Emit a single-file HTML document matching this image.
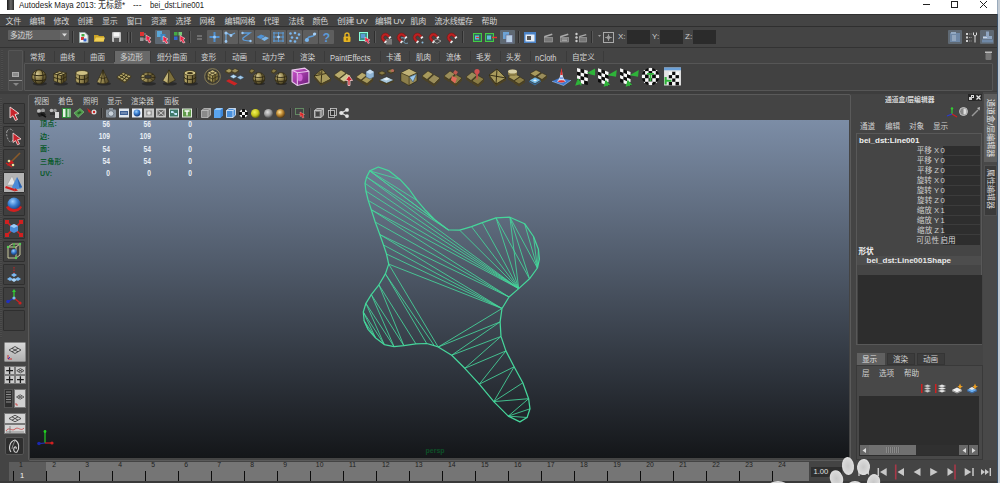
<!DOCTYPE html><html><head><meta charset="utf-8"><title>Autodesk Maya 2013</title><style>
*{box-sizing:border-box;margin:0;padding:0}
html,body{width:1000px;height:483px;overflow:hidden;background:#444}
body{position:relative;font-family:"Liberation Sans","Noto Sans CJK SC",sans-serif;font-size:9px;color:#d8d8d8}
.a{position:absolute}
.t{position:absolute;white-space:nowrap;line-height:1}
.sep{position:absolute;width:1px;background:#2e2e2e;box-shadow:1px 0 0 #585858}
svg{position:absolute;overflow:visible}
</style></head><body>
<svg width="0" height="0" style="left:0;top:0"><defs>
<radialGradient id="gs" cx="35%" cy="30%" r="75%"><stop offset="0" stop-color="#d8cc98"/><stop offset="0.45" stop-color="#94854e"/><stop offset="1" stop-color="#3e361c"/></radialGradient>
<linearGradient id="gl" x1="0" y1="0" x2="1" y2="0"><stop offset="0" stop-color="#b8aa6e"/><stop offset="0.5" stop-color="#8e7f4a"/><stop offset="1" stop-color="#4c4226"/></linearGradient>
<radialGradient id="by" cx="40%" cy="35%" r="65%"><stop offset="0" stop-color="#f4f45a"/><stop offset="0.6" stop-color="#c8c81e"/><stop offset="1" stop-color="#6a6a10"/></radialGradient>
<radialGradient id="bg" cx="40%" cy="35%" r="65%"><stop offset="0" stop-color="#e0e0e0"/><stop offset="0.6" stop-color="#9a9a9a"/><stop offset="1" stop-color="#4c4c4c"/></radialGradient>
<radialGradient id="bo" cx="40%" cy="35%" r="65%"><stop offset="0" stop-color="#ffe6a0"/><stop offset="0.5" stop-color="#c48f38"/><stop offset="1" stop-color="#5a3c12"/></radialGradient>
<radialGradient id="bb" cx="40%" cy="30%" r="70%"><stop offset="0" stop-color="#9fd0ff"/><stop offset="0.5" stop-color="#3a7fd0"/><stop offset="1" stop-color="#173a78"/></radialGradient>
<linearGradient id="pu" x1="0" y1="0" x2="1" y2="1"><stop offset="0" stop-color="#d05ad0"/><stop offset="1" stop-color="#6a1a78"/></linearGradient>
</defs></svg>
<div class="a" style="left:0px;top:0px;width:1000px;height:14px;background:#fff;"></div>
<div class="a" style="left:0px;top:14px;width:997px;height:1.4px;background:#303030;"></div>
<div class="a" style="left:6.5px;top:0px;width:7.5px;height:9.5px;background:linear-gradient(90deg,#1a1a1a,#6a6a6a 55%,#2a2a2a);"></div>
<div class="t" style="left:18.5px;top:0.8px;font-size:8.7px;color:#1a1a1a;transform-origin:0 0;transform:scaleX(0.915);">Autodesk Maya 2013: 无标题*</div>
<div class="t" style="left:133px;top:0.8px;font-size:8.7px;color:#1a1a1a;transform-origin:0 0;transform:scaleX(0.978);">---</div>
<div class="t" style="left:150px;top:0.8px;font-size:8.7px;color:#1a1a1a;transform-origin:0 0;transform:scaleX(0.880);">bei_dst:Line001</div>
<div class="a" style="left:923px;top:4px;width:7px;height:1px;background:#222;"></div>
<div class="a" style="left:951px;top:1px;width:7px;height:7px;background:transparent;border:1px solid #222"></div>
<svg style="left:980px;top:1px;" width="7" height="7" viewBox="0 0 7 7"><path d="M0 0L7 7M7 0L0 7" stroke="#222" stroke-width="1"/></svg>
<div class="t" style="left:5.6px;top:17.6px;font-size:8px;color:#d4d4d4;letter-spacing:-0.4px">文件</div>
<div class="t" style="left:29.6px;top:17.6px;font-size:8px;color:#d4d4d4;letter-spacing:-0.4px">编辑</div>
<div class="t" style="left:53.6px;top:17.6px;font-size:8px;color:#d4d4d4;letter-spacing:-0.4px">修改</div>
<div class="t" style="left:77.6px;top:17.6px;font-size:8px;color:#d4d4d4;letter-spacing:-0.4px">创建</div>
<div class="t" style="left:102.1px;top:17.6px;font-size:8px;color:#d4d4d4;letter-spacing:-0.4px">显示</div>
<div class="t" style="left:126.6px;top:17.6px;font-size:8px;color:#d4d4d4;letter-spacing:-0.4px">窗口</div>
<div class="t" style="left:151.1px;top:17.6px;font-size:8px;color:#d4d4d4;letter-spacing:-0.4px">资源</div>
<div class="t" style="left:175.6px;top:17.6px;font-size:8px;color:#d4d4d4;letter-spacing:-0.4px">选择</div>
<div class="t" style="left:199.6px;top:17.6px;font-size:8px;color:#d4d4d4;letter-spacing:-0.4px">网格</div>
<div class="t" style="left:224.6px;top:17.6px;font-size:8px;color:#d4d4d4;letter-spacing:-0.4px">编辑网格</div>
<div class="t" style="left:263.6px;top:17.6px;font-size:8px;color:#d4d4d4;letter-spacing:-0.4px">代理</div>
<div class="t" style="left:288.6px;top:17.6px;font-size:8px;color:#d4d4d4;letter-spacing:-0.4px">法线</div>
<div class="t" style="left:312.6px;top:17.6px;font-size:8px;color:#d4d4d4;letter-spacing:-0.4px">颜色</div>
<div class="t" style="left:336.6px;top:17.6px;font-size:8px;color:#d4d4d4;transform-origin:0 0;transform:scaleX(1.115);letter-spacing:-0.4px">创建 UV</div>
<div class="t" style="left:374.6px;top:17.6px;font-size:8px;color:#d4d4d4;transform-origin:0 0;transform:scaleX(1.079);letter-spacing:-0.4px">编辑 UV</div>
<div class="t" style="left:410.6px;top:17.6px;font-size:8px;color:#d4d4d4;letter-spacing:-0.4px">肌肉</div>
<div class="t" style="left:434.6px;top:17.6px;font-size:8px;color:#d4d4d4;letter-spacing:-0.4px">流水线缓存</div>
<div class="t" style="left:481.6px;top:17.6px;font-size:8px;color:#d4d4d4;letter-spacing:-0.4px">帮助</div>
<div class="a" style="left:0px;top:26px;width:997px;height:1px;background:#2f2f2f;"></div>
<div class="a" style="left:0px;top:47px;width:997px;height:1px;background:#333;"></div>
<div class="a" style="left:8px;top:30px;width:61px;height:10.3px;background:#606060;border-radius:1px"></div>
<div class="a" style="left:8px;top:40.3px;width:61px;height:1.2px;background:#353535;"></div>
<div class="a" style="left:60px;top:30px;width:9px;height:10.3px;background:#6a6a6a;"></div>
<svg style="left:62px;top:33.3px;" width="5" height="4" viewBox="0 0 5 4"><path d="M0 0.5H5L2.5 3.5Z" fill="#ddd"/></svg>
<div class="t" style="left:10px;top:32.3px;font-size:7.6px;color:#dcdcdc;">多边形</div>
<div class="sep" style="left:72px;top:31px;height:12px"></div>
<svg style="left:79px;top:32px;" width="10" height="11" viewBox="0 0 10 11"><path d="M0.5 0.5H6L9 3.5V10.5H0.5Z" fill="#f2f2f2" stroke="#9aa"/><rect x="2" y="5" width="3" height="3" fill="#d33"/><rect x="4.5" y="6.5" width="3" height="3" fill="#36c"/><rect x="2.5" y="2" width="3" height="2.5" fill="#4a4"/></svg>
<svg style="left:94px;top:34px;" width="11" height="8" viewBox="0 0 11 8"><path d="M0 1H4L5 2H10V7.5H0Z" fill="#c9a227"/><path d="M0 7.5L2 3.5H11L9.5 7.5Z" fill="#f0cf55"/></svg>
<svg style="left:112px;top:32px;" width="9" height="10" viewBox="0 0 9 10"><rect x="0" y="0" width="9" height="10" rx="1" fill="#bdbdbd"/><rect x="1.5" y="0.5" width="6" height="4" fill="#f4f4f4"/><rect x="2" y="6" width="5" height="4" fill="#555"/></svg>
<div class="sep" style="left:127px;top:32px;height:11px"></div>
<div class="sep" style="left:130px;top:32px;height:11px"></div>
<svg style="left:140px;top:32px;" width="12" height="11" viewBox="0 0 12 11"><rect x="0" y="0" width="4" height="4" fill="#d33"/><rect x="0" y="5.5" width="3.5" height="3.5" fill="#999"/><path d="M6 3L11 6L9 7L11 10L9 11L7.5 8L6 9Z" fill="#e24" stroke="#fff" stroke-width="0.5"/><path d="M4 2H6M3.5 7H6" stroke="#bbb" stroke-width="0.7"/></svg>
<div class="a" style="left:155px;top:30px;width:15px;height:14px;background:#5f6973;border-radius:1px"></div>
<svg style="left:157px;top:31px;" width="12" height="12" viewBox="0 0 12 12"><rect x="0" y="0" width="5" height="6" fill="#5aa7d8"/><rect x="3.5" y="3" width="5" height="6" fill="#3b86c2"/><path d="M6 5L11 8L9 9L11 12L9 12.5L7.5 10L6 11Z" fill="#e24" stroke="#fff" stroke-width="0.5"/></svg>
<svg style="left:174px;top:32px;" width="12" height="11" viewBox="0 0 12 11"><rect x="0" y="0" width="3.5" height="3.5" fill="#4a4"/><rect x="4.5" y="0" width="3.5" height="3.5" fill="#7c7"/><rect x="0" y="4.5" width="3.5" height="3.5" fill="#36c"/><path d="M6 3.5L11 6.5L9 7.5L11 10.5L9 11L7.5 8.5L6 9.5Z" fill="#e24" stroke="#fff" stroke-width="0.5"/></svg>
<div class="sep" style="left:189px;top:31px;height:12px"></div>
<svg style="left:197px;top:35px;" width="5" height="5" viewBox="0 0 5 5"><path d="M0 1H5M0 4H5" stroke="#999" stroke-width="1"/></svg>
<div class="a" style="left:207px;top:30px;width:15px;height:14px;background:#5e5e5e;border-radius:1px"></div>
<svg style="left:207px;top:30px;" width="15" height="14" viewBox="0 0 15 14"><path d="M7.5 2V12M2.5 7H12.5" stroke="#4f8fd0" stroke-width="2"/><circle cx="7.5" cy="7" r="1.5" fill="#9cc8f2"/></svg>
<div class="a" style="left:223px;top:30px;width:15px;height:14px;background:#5e5e5e;border-radius:1px"></div>
<svg style="left:223px;top:30px;" width="15" height="14" viewBox="0 0 15 14"><path d="M3 12V3L8 5L12 3" stroke="#6aa6dd" stroke-width="1.2" fill="none"/><circle cx="3" cy="3" r="1.6" fill="#9cc8f2"/><circle cx="8" cy="5.5" r="1.4" fill="#9cc8f2"/><circle cx="3" cy="11.5" r="1.4" fill="#9cc8f2"/></svg>
<div class="a" style="left:239px;top:30px;width:15px;height:14px;background:#5e5e5e;border-radius:1px"></div>
<svg style="left:239px;top:30px;" width="15" height="14" viewBox="0 0 15 14"><path d="M3 3H11L4 8C3 10 6 11 12 11" stroke="#5b9bd8" stroke-width="1.3" fill="none"/><circle cx="3.5" cy="3" r="1.2" fill="#9cc8f2"/><circle cx="11.5" cy="11" r="1.2" fill="#9cc8f2"/></svg>
<div class="a" style="left:255px;top:30px;width:15px;height:14px;background:#5e5e5e;border-radius:1px"></div>
<svg style="left:255px;top:30px;" width="15" height="14" viewBox="0 0 15 14"><path d="M1.5 7L6 4.5L10 6L5.5 9Z" fill="#4f93d6"/><path d="M6 9L10.5 6.5L14 8L9.5 11Z" fill="#78b4ea"/></svg>
<div class="a" style="left:271px;top:30px;width:15px;height:14px;background:#5e5e5e;border-radius:1px"></div>
<svg style="left:271px;top:30px;" width="15" height="14" viewBox="0 0 15 14"><path d="M3 2V12M7.5 2V12M12 2V12M2 3H13M2 7H13M2 11H13" stroke="#5b9bd8" stroke-width="1"/><circle cx="7.5" cy="7" r="1.3" fill="#b5d8f8"/></svg>
<div class="a" style="left:287px;top:30px;width:15px;height:14px;background:#5e5e5e;border-radius:1px"></div>
<svg style="left:287px;top:30px;" width="15" height="14" viewBox="0 0 15 14"><g fill="#7ab4ea"><circle cx="3.5" cy="3.5" r="1.3"/><circle cx="8" cy="3" r="1.3"/><circle cx="12" cy="4.5" r="1.3"/><circle cx="5" cy="7.5" r="1.3"/><circle cx="10" cy="8" r="1.3"/><circle cx="3.5" cy="11" r="1.3"/><circle cx="8" cy="11.5" r="1.3"/></g></svg>
<div class="a" style="left:303px;top:30px;width:15px;height:14px;background:#5e5e5e;border-radius:1px"></div>
<svg style="left:303px;top:30px;" width="15" height="14" viewBox="0 0 15 14"><path d="M2 11L6 7L10 6L13 3" stroke="#5b9bd8" stroke-width="1.4" fill="none"/><circle cx="4" cy="10" r="2" fill="#7ab4ea"/><circle cx="11.5" cy="4" r="1.6" fill="#a8d0f5"/></svg>
<div class="a" style="left:319px;top:30px;width:15px;height:14px;background:#5e5e5e;border-radius:1px"></div>
<svg style="left:319px;top:30px;" width="15" height="14" viewBox="0 0 15 14"><text x="7.5" y="11.5" font-size="12" font-weight="bold" fill="#5b9bd8" text-anchor="middle" font-family="Liberation Sans,sans-serif">?</text></svg>
<svg style="left:343px;top:32px;" width="8" height="10" viewBox="0 0 8 10"><path d="M2 5V3A2 2 0 0 1 6 3V5" stroke="#e6b422" stroke-width="1.4" fill="none"/><rect x="0.5" y="4.5" width="7" height="5.5" rx="1" fill="#e6b422"/><rect x="3.3" y="6" width="1.4" height="2.5" fill="#7a5a08"/></svg>
<svg style="left:359px;top:32px;" width="11" height="11" viewBox="0 0 11 11"><rect x="0.5" y="0.5" width="8" height="8" fill="#3f8f8a" stroke="#8fd"/><rect x="2" y="2" width="4" height="4" fill="#5b9bd8"/><path d="M6 5L11 8L9 8.5L10.5 11L9 11.5L7.5 9L6 10Z" fill="#e24" stroke="#fff" stroke-width="0.4"/></svg>
<div class="sep" style="left:374px;top:31px;height:12px"></div>
<svg style="left:380px;top:32px;" width="13" height="12" viewBox="0 0 13 12"><g transform="translate(5.5,5.5) rotate(-45) scale(0.88)"><path d="M-5 2.5V0A5 5 0 0 1 5 0V2.5H2V0A2 2 0 0 0 -2 0V2.5Z" fill="#bc2222" stroke="#701010" stroke-width="0.5"/><rect x="-5" y="2.5" width="3" height="2" fill="#f0f0f0"/><rect x="2" y="2.5" width="3" height="2" fill="#f0f0f0"/></g><path d="M6 8H12M6 10H12M6 12H12M7 7V12M9 7V12M11 7V12" stroke="#bbb" stroke-width="0.5"/></svg>
<svg style="left:396px;top:32px;" width="13" height="12" viewBox="0 0 13 12"><g transform="translate(5.5,5.5) rotate(-45) scale(0.88)"><path d="M-5 2.5V0A5 5 0 0 1 5 0V2.5H2V0A2 2 0 0 0 -2 0V2.5Z" fill="#bc2222" stroke="#701010" stroke-width="0.5"/><rect x="-5" y="2.5" width="3" height="2" fill="#f0f0f0"/><rect x="2" y="2.5" width="3" height="2" fill="#f0f0f0"/></g><path d="M5 6C8 5 10 7 8 9C7 11 10 12 12 11" stroke="#8bd" stroke-width="0.8" fill="none"/></svg>
<svg style="left:412px;top:32px;" width="13" height="12" viewBox="0 0 13 12"><g transform="translate(5.5,5.5) rotate(-45) scale(0.88)"><path d="M-5 2.5V0A5 5 0 0 1 5 0V2.5H2V0A2 2 0 0 0 -2 0V2.5Z" fill="#bc2222" stroke="#701010" stroke-width="0.5"/><rect x="-5" y="2.5" width="3" height="2" fill="#f0f0f0"/><rect x="2" y="2.5" width="3" height="2" fill="#f0f0f0"/></g><circle cx="10.5" cy="10.5" r="1" fill="#8bd"/></svg>
<svg style="left:428px;top:32px;" width="13" height="12" viewBox="0 0 13 12"><g transform="translate(5.5,5.5) rotate(-45) scale(0.88)"><path d="M-5 2.5V0A5 5 0 0 1 5 0V2.5H2V0A2 2 0 0 0 -2 0V2.5Z" fill="#bc2222" stroke="#701010" stroke-width="0.5"/><rect x="-5" y="2.5" width="3" height="2" fill="#f0f0f0"/><rect x="2" y="2.5" width="3" height="2" fill="#f0f0f0"/></g><path d="M5 9L9 7L13 9L9 11.5Z" fill="none" stroke="#ccc" stroke-width="0.6"/></svg>
<svg style="left:446px;top:32px;" width="13" height="12" viewBox="0 0 13 12"><g transform="translate(5.5,5.5) rotate(-45) scale(0.88)"><path d="M-5 2.5V0A5 5 0 0 1 5 0V2.5H2V0A2 2 0 0 0 -2 0V2.5Z" fill="#bc2222" stroke="#701010" stroke-width="0.5"/><rect x="-5" y="2.5" width="3" height="2" fill="#f0f0f0"/><rect x="2" y="2.5" width="3" height="2" fill="#f0f0f0"/></g></svg>
<div class="sep" style="left:462px;top:31px;height:12px"></div>
<svg style="left:473px;top:33px;" width="9" height="9" viewBox="0 0 9 9"><rect x="0.5" y="0.5" width="8" height="8" fill="#2f6f5a" stroke="#4c4"/><rect x="2" y="2.5" width="4" height="4" fill="#6bd"/><path d="M6 4.5H3" stroke="#e33" stroke-width="1.2"/></svg>
<svg style="left:485px;top:33px;" width="12" height="9" viewBox="0 0 12 9"><rect x="0.5" y="0.5" width="8" height="8" fill="#2f6f5a" stroke="#4c4"/><rect x="2" y="2.5" width="4" height="4" fill="#6bd"/><path d="M7 4.5H12" stroke="#e33" stroke-width="1.4"/></svg>
<div class="a" style="left:500px;top:30px;width:15px;height:14px;background:#5f6973;border-radius:1px"></div>
<svg style="left:503px;top:32px;" width="10" height="11" viewBox="0 0 10 11"><rect x="0" y="0" width="6" height="7" fill="#6da3d6"/><rect x="3" y="3" width="6.5" height="7.5" fill="#b9cfe6" stroke="#557" stroke-width="0.5"/></svg>
<div class="sep" style="left:518px;top:31px;height:12px"></div>
<svg style="left:524px;top:32px;" width="12" height="11" viewBox="0 0 12 11"><rect x="0" y="0" width="12" height="11" fill="#4a82c6"/><rect x="1.5" y="2.5" width="9" height="7" fill="#e8eef6"/><rect x="3" y="4" width="4" height="4" fill="#555"/></svg>
<svg style="left:543px;top:33px;" width="10" height="9" viewBox="0 0 10 9"><path d="M1 3L9 0.5L9.5 2L1.5 4.5Z" fill="#aaa"/><rect x="1.5" y="4.5" width="8" height="4.5" fill="#777" stroke="#aaa" stroke-width="0.6"/></svg>
<svg style="left:559px;top:33px;" width="10" height="9" viewBox="0 0 10 9"><path d="M1 3L9 0.5L9.5 2L1.5 4.5Z" fill="#aaa"/><rect x="1.5" y="4.5" width="8" height="4.5" fill="#777" stroke="#aaa" stroke-width="0.6"/><path d="M3 6H8M3 7.5H8" stroke="#ccc" stroke-width="0.5"/></svg>
<svg style="left:575px;top:32px;" width="12" height="11" viewBox="0 0 12 11"><circle cx="1.5" cy="2" r="1.2" fill="#ccc"/><circle cx="1.5" cy="5.5" r="1.2" fill="#ccc"/><circle cx="1.5" cy="9" r="1.2" fill="#ccc"/><path d="M4 4L11 2L11.5 3.3L4.5 5.3Z" fill="#aaa"/><rect x="4.5" y="5.5" width="7" height="4.5" fill="#777" stroke="#aaa" stroke-width="0.6"/></svg>
<div class="sep" style="left:591px;top:31px;height:12px"></div>
<svg style="left:598px;top:32px;" width="17" height="11" viewBox="0 0 17 11"><path d="M0 3H3L1.5 5Z" fill="#999"/><rect x="5.5" y="0.5" width="10" height="10" fill="none" stroke="#aaa"/><path d="M10.5 2V9M7 5.5H14" stroke="#aaa" stroke-width="0.7"/><circle cx="10.5" cy="5.5" r="1.5" fill="none" stroke="#ccc" stroke-width="0.6"/></svg>
<div class="t" style="left:618px;top:33px;font-size:8px;color:#ccc;">X:</div>
<div class="a" style="left:627px;top:30px;width:23px;height:14px;background:#2b2b2b;"></div>
<div class="t" style="left:652px;top:33px;font-size:8px;color:#ccc;">Y:</div>
<div class="a" style="left:660px;top:30px;width:23px;height:14px;background:#2b2b2b;"></div>
<div class="t" style="left:685px;top:33px;font-size:8px;color:#ccc;">Z:</div>
<div class="a" style="left:693px;top:30px;width:23px;height:14px;background:#2b2b2b;"></div>
<div class="a" style="left:948px;top:30px;width:14px;height:14px;background:#5f6973;border-radius:1px"></div>
<svg style="left:950px;top:32px;" width="10" height="10" viewBox="0 0 10 10"><rect x="0" y="1" width="10" height="9" fill="#6f88a6"/><path d="M1 0H6V2H1Z" fill="#93a9c2"/><path d="M2 4H6M2 6H6M2 8H6" stroke="#c8d4e2" stroke-width="0.8"/></svg>
<svg style="left:966px;top:32px;" width="11" height="11" viewBox="0 0 11 11"><g fill="#d0d0d0"><rect x="0" y="1" width="2" height="2"/><rect x="0" y="4.5" width="2" height="2"/><rect x="0" y="8" width="2" height="2"/></g><path d="M3 2H6M3 5.5H6M3 9H6" stroke="#aaa" stroke-width="0.8" stroke-dasharray="1 0.6"/><path d="M7.5 0.5V3L9 4V10.5M10.5 0.5V3L9 4" stroke="#ddd" stroke-width="1" fill="none"/></svg>
<div class="a" style="left:980px;top:30px;width:14px;height:14px;background:#5f6973;border-radius:1px"></div>
<svg style="left:982px;top:31px;" width="11" height="12" viewBox="0 0 11 12"><path d="M4 0.5H7V5H10V8H1V5H4Z" fill="#8ea4bf"/><path d="M0 8.5H11V11.5H0Z" fill="#6f88a6"/><path d="M1 6.5H5" stroke="#c8d4e2" stroke-width="1"/></svg>
<div class="a" style="left:1px;top:50px;width:2px;height:40px;background:repeating-linear-gradient(180deg,#4c4c4c 0 1px,#404040 1px 2px);"></div>
<div class="a" style="left:8px;top:49.5px;width:14.5px;height:41.5px;background:#494949;border:1px solid #555;border-radius:1px"></div>
<div class="a" style="left:12.4px;top:72px;width:7px;height:5px;background:#8a8a8a;border:1px solid #aaa"></div>
<div class="a" style="left:9.3px;top:79.5px;width:13px;height:1px;background:#8a8a8a;"></div>
<svg style="left:12.5px;top:83px;" width="6" height="3" viewBox="0 0 6 3"><path d="M0 0H6L3 3Z" fill="#888"/></svg>
<div class="a" style="left:23.5px;top:63px;width:969.5px;height:27.8px;background:#414141;border:1px solid #565656;border-radius:1px"></div>
<div class="a" style="left:0px;top:91px;width:997px;height:2.5px;background:#3d3d3d;"></div>
<div class="a" style="left:114px;top:51px;width:36.3px;height:12.5px;background:#696969;"></div>
<div class="a" style="left:24px;top:51px;width:1px;height:11px;background:#3a3a3a;"></div>
<div class="a" style="left:54px;top:51px;width:1px;height:11px;background:#3a3a3a;"></div>
<div class="a" style="left:84px;top:51px;width:1px;height:11px;background:#3a3a3a;"></div>
<div class="a" style="left:114px;top:51px;width:1px;height:11px;background:#3a3a3a;"></div>
<div class="a" style="left:150px;top:51px;width:1px;height:11px;background:#3a3a3a;"></div>
<div class="a" style="left:195px;top:51px;width:1px;height:11px;background:#3a3a3a;"></div>
<div class="a" style="left:225px;top:51px;width:1px;height:11px;background:#3a3a3a;"></div>
<div class="a" style="left:255px;top:51px;width:1px;height:11px;background:#3a3a3a;"></div>
<div class="a" style="left:293px;top:51px;width:1px;height:11px;background:#3a3a3a;"></div>
<div class="a" style="left:324px;top:51px;width:1px;height:11px;background:#3a3a3a;"></div>
<div class="a" style="left:380px;top:51px;width:1px;height:11px;background:#3a3a3a;"></div>
<div class="a" style="left:409px;top:51px;width:1px;height:11px;background:#3a3a3a;"></div>
<div class="a" style="left:439px;top:51px;width:1px;height:11px;background:#3a3a3a;"></div>
<div class="a" style="left:470px;top:51px;width:1px;height:11px;background:#3a3a3a;"></div>
<div class="a" style="left:500px;top:51px;width:1px;height:11px;background:#3a3a3a;"></div>
<div class="a" style="left:530px;top:51px;width:1px;height:11px;background:#3a3a3a;"></div>
<div class="a" style="left:566px;top:51px;width:1px;height:11px;background:#3a3a3a;"></div>
<div class="a" style="left:603px;top:51px;width:1px;height:11px;background:#3a3a3a;"></div>
<div class="t" style="left:30px;top:54.2px;font-size:7.6px;color:#d4d4d4;">常规</div>
<div class="t" style="left:60px;top:54.2px;font-size:7.6px;color:#d4d4d4;">曲线</div>
<div class="t" style="left:90px;top:54.2px;font-size:7.6px;color:#d4d4d4;">曲面</div>
<div class="t" style="left:120px;top:54.2px;font-size:7.6px;color:#d4d4d4;">多边形</div>
<div class="t" style="left:157px;top:54.2px;font-size:7.6px;color:#d4d4d4;">细分曲面</div>
<div class="t" style="left:201px;top:54.2px;font-size:7.6px;color:#d4d4d4;">变形</div>
<div class="t" style="left:232px;top:54.2px;font-size:7.6px;color:#d4d4d4;">动画</div>
<div class="t" style="left:262px;top:54.2px;font-size:7.6px;color:#d4d4d4;">动力学</div>
<div class="t" style="left:300px;top:54.2px;font-size:7.6px;color:#d4d4d4;">渲染</div>
<div class="t" style="left:330px;top:53.6px;font-size:8.4px;color:#d4d4d4;transform-origin:0 0;transform:scaleX(0.909);">PaintEffects</div>
<div class="t" style="left:386px;top:54.2px;font-size:7.6px;color:#d4d4d4;">卡通</div>
<div class="t" style="left:416px;top:54.2px;font-size:7.6px;color:#d4d4d4;">肌肉</div>
<div class="t" style="left:446px;top:54.2px;font-size:7.6px;color:#d4d4d4;">流体</div>
<div class="t" style="left:476px;top:54.2px;font-size:7.6px;color:#d4d4d4;">毛发</div>
<div class="t" style="left:506px;top:54.2px;font-size:7.6px;color:#d4d4d4;">头发</div>
<div class="t" style="left:535px;top:53.6px;font-size:8.4px;color:#d4d4d4;transform-origin:0 0;transform:scaleX(0.888);">nCloth</div>
<div class="t" style="left:572px;top:54.2px;font-size:7.6px;color:#d4d4d4;">自定义</div>
<svg style="left:985px;top:51px;" width="7" height="9" viewBox="0 0 7 9"><rect x="0.5" y="2" width="6" height="7" rx="1" fill="#777"/><rect x="0" y="0.5" width="7" height="1.5" fill="#bbb"/></svg>
<svg style="left:30.5px;top:68.5px" width="16" height="16" viewBox="-9 -9 18 18"><ellipse cx="1" cy="7.5" rx="8" ry="2" fill="#000" opacity="0.35"/><circle r="8" fill="url(#gs)" stroke="#2b2510" stroke-width="0.8"/><path d="M-7.5 -2.8A9 3 0 0 0 7.5 -2.8M-7.5 2.8A9 3 0 0 0 7.5 2.8M-2.8 -7.5A4 9 0 0 0 -2.8 7.5M2.8 -7.5A4 9 0 0 1 2.8 7.5" stroke="#2b2510" stroke-width="1.1" fill="none"/></svg>
<svg style="left:52.0px;top:68.5px" width="16" height="16" viewBox="-9 -9 18 18"><ellipse cx="1" cy="7.5" rx="8" ry="2" fill="#000" opacity="0.35"/><path d="M-7 -3.5L-1 -6.5L7 -4.5L1.5 -1.5Z" fill="#cfc184" stroke="#2b2510" stroke-width="0.7"/><path d="M-7 -3.5L1.5 -1.5V7.5L-7 4.5Z" fill="#9c8e54" stroke="#2b2510" stroke-width="0.7"/><path d="M1.5 -1.5L7 -4.5V4L1.5 7.5Z" fill="#5e532c" stroke="#2b2510" stroke-width="0.7"/><path d="M-7 0.5L1.5 3L7 -0.3M-2.8 -2.5V6M4.3 -3V5.7M-4 -5L4.3 -3M-2.8 -2.5L3 -5.5" stroke="#2b2510" stroke-width="1" fill="none"/></svg>
<svg style="left:74.0px;top:68.5px" width="16" height="16" viewBox="-9 -9 18 18"><ellipse cx="1" cy="7.5" rx="8" ry="2" fill="#000" opacity="0.35"/><path d="M-7 -4.5V4.5A7 2.8 0 0 0 7 4.5V-4.5Z" fill="url(#gl)" stroke="#2b2510" stroke-width="0.7"/><ellipse cx="0" cy="-4.5" rx="7" ry="2.8" fill="#cfc184" stroke="#2b2510" stroke-width="0.7"/><path d="M-7 0A7 2.8 0 0 0 7 0M-2.8 -2V7M2.8 -2V7" stroke="#2b2510" stroke-width="1" fill="none"/></svg>
<svg style="left:95.0px;top:68.5px" width="16" height="16" viewBox="-9 -9 18 18"><ellipse cx="1" cy="7.5" rx="8" ry="2" fill="#000" opacity="0.35"/><path d="M0 -8L-6.5 5A6.5 2.5 0 0 0 6.5 5Z" fill="url(#gl)" stroke="#2b2510" stroke-width="0.7"/><path d="M0 -8L-2.5 7M0 -8L2.5 7M-3.8 0A3.8 1.5 0 0 0 3.8 0" stroke="#2b2510" stroke-width="0.9" fill="none"/></svg>
<svg style="left:116.0px;top:68.5px" width="16" height="16" viewBox="-9 -9 18 18"><path d="M-8 0V1.8L1 7.3L8 0.8V-1L1 5.5Z" fill="#4c4226"/><path d="M-8 0L-1 -5L8 -1L1 5.5Z" fill="#b8aa6c" stroke="#2b2510" stroke-width="0.7"/><path d="M-5.7 -1.7L3.3 3.3M-3.3 -3.3L5.7 1.2M-5 2L2 -3.7M-2 3.8L5 -2.3" stroke="#2b2510" stroke-width="1"/></svg>
<svg style="left:139.5px;top:68.5px" width="16" height="16" viewBox="-9 -9 18 18"><ellipse cx="1" cy="7.5" rx="8" ry="2" fill="#000" opacity="0.35"/><ellipse cx="0" cy="0.5" rx="8" ry="5.5" fill="url(#gl)" stroke="#2b2510" stroke-width="0.7"/><ellipse cx="0" cy="-0.3" rx="3.8" ry="2" fill="#3a3a3a" stroke="#2b2510" stroke-width="0.7"/><path d="M0 -5V-2.3M0 1.8V6M-8 0.5H-3.8M3.8 0.5H8M-5.8 -3.3L-2.8 -1.6M5.8 -3.3L2.8 -1.6M-5.8 4.3L-2.8 1.2M5.8 4.3L2.8 1.2" stroke="#2b2510" stroke-width="0.9"/></svg>
<svg style="left:161.0px;top:68.5px" width="16" height="16" viewBox="-9 -9 18 18"><ellipse cx="1" cy="7.5" rx="8" ry="2" fill="#000" opacity="0.35"/><path d="M0 -8L-7 4L-1 7.5Z" fill="#c0b276" stroke="#2b2510" stroke-width="0.7"/><path d="M0 -8L-1 7.5L7 3.5Z" fill="#7c6f3c" stroke="#2b2510" stroke-width="0.7"/></svg>
<svg style="left:182.0px;top:68.5px" width="16" height="16" viewBox="-9 -9 18 18"><ellipse cx="1" cy="7.5" rx="8" ry="2" fill="#000" opacity="0.35"/><path d="M-6.5 -4.5V4.5A6.5 2.8 0 0 0 6.5 4.5V-4.5Z" fill="url(#gl)" stroke="#2b2510" stroke-width="0.7"/><ellipse cx="0" cy="-4.5" rx="6.5" ry="2.8" fill="#cfc184" stroke="#2b2510" stroke-width="0.7"/><ellipse cx="0" cy="-4.3" rx="3.4" ry="1.3" fill="#3a3218"/><path d="M-6.5 0A6.5 2.8 0 0 0 6.5 0M-2.8 -2V7M2.8 -2V7" stroke="#2b2510" stroke-width="1" fill="none"/></svg>
<svg style="left:204.0px;top:68.0px" width="17" height="17" viewBox="-9 -9 18 18"><circle r="8.3" fill="#3f3d36" stroke="#8f8458" stroke-width="1"/><path d="M-5.5 -3.5L0 -6.5L5.5 -3.5V3L0 6.5L-5.5 3Z" fill="#a89a5c" stroke="#2b2510" stroke-width="0.6"/><path d="M-5.5 -3.5L0 -6.5L5.5 -3.5L0 -0.8Z" fill="#cfc184"/><path d="M0 -0.8L5.5 -3.5V3L0 6.5Z" fill="#7c6f3c"/><path d="M-5.5 -0.3L0 2.8L5.5 -0.3M-2.8 -5L2.8 -2.2M2.8 -5L-2.8 -2.2M-2.8 -2.2V4.8M2.8 -2.2V4.8M0 -0.8V6.5M-5.5 -3.5L0 -0.8L5.5 -3.5" stroke="#2b2510" stroke-width="0.7" fill="none"/></svg>
<svg style="left:225.0px;top:67.5px" width="18" height="18" viewBox="-9 -9 18 18"><path d="M-9 -6V-4.8L-5 -2.8L-1 -5.3V-6.5L-5 -4Z" fill="#4c4226"/><path d="M-9 -6L-5 -8.5L-1 -6.5L-5 -4Z" fill="#a89a5c" stroke="#2b2510" stroke-width="0.5"/><path d="M-3 -6V-4.8L1 -2.8L5 -5.3V-6.5L1 -4Z" fill="#4c4226"/><path d="M-3 -6L1 -8.5L5 -6.5L1 -4Z" fill="#9a8d5a" stroke="#2b2510" stroke-width="0.5"/><path d="M-4 -0.5l3.5 -2l3.5 2l-3.5 2z" fill="#b8dcf4" stroke="#357" stroke-width="0.4"/><path d="M3 0.5l3.5 -2l3.5 2l-3.5 2z" fill="#a0c8e8" stroke="#357" stroke-width="0.4"/><path d="M-8 4L-5 2.2L3.5 6.5L0.5 8.6Z" fill="#cc2424"/></svg>
<svg style="left:248.5px;top:68.0px" width="17" height="17" viewBox="-9 -9 18 18"><ellipse cx="2" cy="7.5" rx="6" ry="1.6" fill="#000" opacity="0.35"/><circle cx="1.5" cy="2" r="6.2" fill="url(#gs)" stroke="#2b2510" stroke-width="0.7"/><path d="M-4.3 0A7 2.4 0 0 0 7.3 0M-4.3 4.2A7 2.4 0 0 0 7.3 4.2M-0.6 -3.8A3 6.5 0 0 0 -0.6 7.8M3.6 -3.8A3 6.5 0 0 1 3.6 7.8" stroke="#2b2510" stroke-width="0.9" fill="none"/><path d="M-9 -5.5V-4.3L-6 -2.5999999999999996L-3 -5.1V-6.3L-6 -3.8Z" fill="#4c4226"/><path d="M-9 -5.5L-6 -8L-3 -6.3L-6 -3.8Z" fill="#8a7c45" stroke="#2b2510" stroke-width="0.5"/></svg>
<svg style="left:270.5px;top:68.0px" width="17" height="17" viewBox="-9 -9 18 18"><ellipse cx="2" cy="7.5" rx="6" ry="1.6" fill="#000" opacity="0.35"/><circle cx="1.5" cy="2" r="6.2" fill="url(#gs)" stroke="#2b2510" stroke-width="0.7"/><path d="M-4.3 0A7 2.4 0 0 0 7.3 0M-4.3 4.2A7 2.4 0 0 0 7.3 4.2M-0.6 -3.8A3 6.5 0 0 0 -0.6 7.8M3.6 -3.8A3 6.5 0 0 1 3.6 7.8" stroke="#2b2510" stroke-width="0.9" fill="none"/><path d="M-9 -5.5V-4.3L-6 -2.5999999999999996L-3 -5.1V-6.3L-6 -3.8Z" fill="#4c4226"/><path d="M-9 -5.5L-6 -8L-3 -6.3L-6 -3.8Z" fill="#8a7c45" stroke="#2b2510" stroke-width="0.5"/></svg>
<svg style="left:290.5px;top:66.5px" width="19" height="19" viewBox="-9 -9 18 18"><path d="M-8 -6L4 -8L8 -5V6L-3 8.5L-8 5Z" fill="url(#pu)" stroke="#e8c8ec" stroke-width="1.1"/><path d="M-8 -6L-3 -3.5L8 -5M-3 -3.5V8.5" stroke="#e8c8ec" stroke-width="1" fill="none"/><ellipse cx="-0.5" cy="1" rx="2.5" ry="3.5" fill="#e478e8" opacity="0.75"/></svg>
<svg style="left:312.5px;top:67.5px" width="18" height="18" viewBox="-9 -9 18 18"><path d="M-8 -1L0 -8L9 2L-1 7Z" fill="#a89a5c" stroke="#2b2510" stroke-width="0.7"/><path d="M-8 -1L-1 7L9 2V4L-1 9L-8 1Z" fill="#4c4226"/><path d="M0 -8L-1 7M-8 -1L4 -3.5" stroke="#2b2510" stroke-width="0.9" fill="none"/><path d="M-5 -3L-2 -6L0 -2Z" fill="#6b5f33"/></svg>
<svg style="left:334.0px;top:67.5px" width="18" height="18" viewBox="-9 -9 18 18"><path d="M-9 -2V0.5L-4 4.0L3 -1.5V-4L-4 1.5Z" fill="#4c4226"/><path d="M-9 -2L-2 -7L3 -4L-4 1.5Z" fill="#b8aa6c" stroke="#2b2510" stroke-width="0.5"/><path d="M-3.5 2V4.5L1 7.5L8 1.5V-1L1 5Z" fill="#4c4226"/><path d="M-3.5 2L3.5 -3.5L8 -1L1 5Z" fill="#cfc690" stroke="#2b2510" stroke-width="0.5"/><path d="M5 8.5V3.5H2.5L6 -1.5L9.5 3.5H7V8.5Z" fill="#c82430" stroke="#f4d0d0" stroke-width="0.8"/></svg>
<svg style="left:356.0px;top:67.5px" width="18" height="18" viewBox="-9 -9 18 18"><path d="M-9 0V2.5L-4 5.5L2 0.5V-2L-4 3Z" fill="#4c4226"/><path d="M-9 0L-3 -4.5L2 -2L-4 3Z" fill="#b8aa6c" stroke="#2b2510" stroke-width="0.5"/><path d="M-3.5 3.5V6.0L2 9.0L8 4.0V1.5L2 6.5Z" fill="#4c4226"/><path d="M-3.5 3.5L2.5 -1.5L8 1.5L2 6.5Z" fill="#a89a5c" stroke="#2b2510" stroke-width="0.5"/><path d="M1 -5L5 -7.5L9 -5V0L5 2L1 0Z" fill="#8fb4d4" stroke="#345" stroke-width="0.5"/><path d="M1 -5L5 -3L9 -5L5 -7.5Z" fill="#c4dcf0"/></svg>
<svg style="left:378.0px;top:67.5px" width="18" height="18" viewBox="-9 -9 18 18"><path d="M-9 -4v1l4 2l4 -2v-1l-4 2z" fill="#4c4226"/><path d="M-9 -4l4 -2l4 2l-4 2z" fill="#8a7c45" stroke="#2b2510" stroke-width="0.5"/><path d="M0 -6v1l4 2l4 -2v-1l-4 2z" fill="#4c4226"/><path d="M0 -6l4 -2l4 2l-4 2z" fill="#8a7c45" stroke="#2b2510" stroke-width="0.5"/><circle cx="5.5" cy="-6.5" r="1.6" fill="#b86a5a"/><path d="M-8 3v1.8l7.5 3.3l7.5 -3.3v-1.8l-7.5 3.3z" fill="#4c4226"/><path d="M-8 3l7.5 -3.3l7.5 3.3l-7.5 3.3z" fill="#a8c8dc" stroke="#2b2510" stroke-width="0.5"/><path d="M-4 2L0 0.5L3 2L-1 3.5Z" fill="#e4f0f8"/></svg>
<svg style="left:400.0px;top:67.5px" width="18" height="18" viewBox="-9 -9 18 18"><path d="M-8 -4L0 -8L8 -4V4L0 8.5L-8 4Z" fill="#9a8d5a" stroke="#2b2510" stroke-width="0.7"/><path d="M-8 -4L0 -8L8 -4L0 -0.5Z" fill="#c0b276"/><path d="M-8 -4L0 -0.5L8 -4M0 -0.5V8.5" stroke="#2b2510" stroke-width="0.8" fill="none"/><path d="M0.5 0L7.5 -3L4 5Z" fill="#9cc8ec" stroke="#246" stroke-width="0.5"/><path d="M-8 -4V4L0 8.5V-0.5Z" fill="#7c6f3c" opacity="0.5"/></svg>
<svg style="left:422.0px;top:67.5px" width="18" height="18" viewBox="-9 -9 18 18"><path d="M-9 -1V1.5L-4 5.0L2 -0.5V-3L-4 2.5Z" fill="#4c4226"/><path d="M-9 -1L-3 -6L2 -3L-4 2.5Z" fill="#a89a5c" stroke="#2b2510" stroke-width="0.5"/><path d="M-3 3V5.5L3 9.5L9 3.5V1L3 7Z" fill="#4c4226"/><path d="M-3 3L3 -2.5L9 1L3 7Z" fill="#9a8d5a" stroke="#2b2510" stroke-width="0.5"/></svg>
<svg style="left:444.0px;top:67.5px" width="18" height="18" viewBox="-9 -9 18 18"><path d="M-9 -1V1.5L-4 5.0L2 -0.5V-3L-4 2.5Z" fill="#4c4226"/><path d="M-9 -1L-3 -6L2 -3L-4 2.5Z" fill="#9a8d5a" stroke="#2b2510" stroke-width="0.5"/><path d="M-3 3V5.5L3 9.5L9 3.5V1L3 7Z" fill="#4c4226"/><path d="M-3 3L3 -2.5L9 1L3 7Z" fill="#8a7c45" stroke="#2b2510" stroke-width="0.5"/><path d="M-1 -1L4 1L2 6.5L-2 3Z" fill="#e06a5a"/><path d="M2 -7L5 -5L3 -2L0 -4Z" fill="#c05a50"/></svg>
<svg style="left:466.0px;top:67.5px" width="18" height="18" viewBox="-9 -9 18 18"><path d="M-9 0V2.5L-4 6.0L2 0.5V-2L-4 3.5Z" fill="#4c4226"/><path d="M-9 0L-3 -5L2 -2L-4 3.5Z" fill="#9a8d5a" stroke="#2b2510" stroke-width="0.5"/><path d="M-3 4V6.5L3 10.0L9 4.5V2L3 7.5Z" fill="#4c4226"/><path d="M-3 4L3 -1.5L9 2L3 7.5Z" fill="#8a7c45" stroke="#2b2510" stroke-width="0.5"/><circle cx="2" cy="-5.5" r="2.6" fill="#d05050"/><path d="M1 -3.5H3L2.6 2.5H1.4Z" fill="#d05050"/></svg>
<svg style="left:488.0px;top:67.5px" width="18" height="18" viewBox="-9 -9 18 18"><path d="M-8 -2L-1 7L9 1V3.5L-1 9.5L-8 0.5Z" fill="#4c4226"/><path d="M-8 -2L0 -8L9 1L-1 7Z" fill="#a89a5c" stroke="#2b2510" stroke-width="0.7"/><path d="M-8 -2L9 1M0 -8L-1 7" stroke="#2b2510" stroke-width="0.9"/></svg>
<svg style="left:507.0px;top:67.5px" width="18" height="18" viewBox="-9 -9 18 18"><path d="M-8 0V2.5L-2 6.0L4 2.0V-0.5L-2 3.5Z" fill="#4c4226"/><path d="M-8 0L-2 -3.5L4 -0.5L-2 3.5Z" fill="#a89a5c" stroke="#2b2510" stroke-width="0.5"/><path d="M-2 4V6.5L3 9.5L9 5.5V3L3 7Z" fill="#4c4226"/><path d="M-2 4L4 0L9 3L3 7Z" fill="#8a7c45" stroke="#2b2510" stroke-width="0.5"/><path d="M-8 -5.5A4.5 2 0 0 1 1 -5.5V-3A4.5 2 0 0 1 -8 -3Z" fill="#8a7c45"/><ellipse cx="-3.5" cy="-5.5" rx="4.5" ry="2" fill="#d8d0a8"/></svg>
<svg style="left:529.0px;top:67.5px" width="18" height="18" viewBox="-9 -9 18 18"><path d="M-8 -3.5V-1.0L-3 2.0L3 -2.0V-4.5L-3 -0.5Z" fill="#4c4226"/><path d="M-8 -3.5L-2 -7L3 -4.5L-3 -0.5Z" fill="#a89a5c" stroke="#2b2510" stroke-width="0.5"/><path d="M-1 -0.5V2.0L4 5.0L9 1.0V-1.5L4 2.5Z" fill="#4c4226"/><path d="M-1 -0.5L4 -4L9 -1.5L4 2.5Z" fill="#9a8d5a" stroke="#2b2510" stroke-width="0.5"/><path d="M-9 3.5V5.1L-3 8.4L3 4.6V3L-3 6.8Z" fill="#3a6a98"/><path d="M-9 3.5L-3 0L3 3L-3 6.8Z" fill="#78bce8" stroke="#2b2510" stroke-width="0.5"/><path d="M-5 3.4l2 -1.2l2 1.2l-2 1.2z" fill="#e4f4fc"/></svg>
<svg style="left:551.5px;top:67.0px" width="19" height="19" viewBox="-9 -9 18 18"><path d="M-9 4.5L-2 1.5L9 3.5L2 8.5Z" fill="#3f78d0"/><path d="M-9 4.5L2 8.5L9 3.5" fill="none" stroke="#9cc4f4" stroke-width="0.6"/><path d="M-4.5 4.5C-1.2 3 -1.2 -2 0 -7C1.2 -2 1.2 3 4.5 4.5C1.5 6.3 -1.5 6.3 -4.5 4.5Z" fill="#d4dcf4"/><path d="M-1.1 -1.5L0 -8.5L1.1 -1.5Z" fill="#e03030"/><ellipse cx="0" cy="4.6" rx="3.2" ry="1.1" fill="#e03030"/><path d="M-1.6 1.5H1.6" stroke="#5a8ae0" stroke-width="1.2"/></svg>
<svg style="left:575.5px;top:67.0px" width="19" height="19" viewBox="-9 -9 18 18"><g transform="skewY(14)"><rect x="-8.00" y="-6.00" width="3.4" height="3.4" fill="#f8f8f8"/><rect x="-8.00" y="-2.60" width="3.4" height="3.4" fill="#0c0c0c"/><rect x="-8.00" y="0.80" width="3.4" height="3.4" fill="#f8f8f8"/><rect x="-8.00" y="4.20" width="3.4" height="3.4" fill="#0c0c0c"/><rect x="-4.60" y="-6.00" width="3.4" height="3.4" fill="#0c0c0c"/><rect x="-4.60" y="-2.60" width="3.4" height="3.4" fill="#f8f8f8"/><rect x="-4.60" y="0.80" width="3.4" height="3.4" fill="#0c0c0c"/><rect x="-4.60" y="4.20" width="3.4" height="3.4" fill="#f8f8f8"/><rect x="-1.20" y="-6.00" width="3.4" height="3.4" fill="#f8f8f8"/><rect x="-1.20" y="-2.60" width="3.4" height="3.4" fill="#0c0c0c"/><rect x="-1.20" y="0.80" width="3.4" height="3.4" fill="#f8f8f8"/><rect x="-1.20" y="4.20" width="3.4" height="3.4" fill="#0c0c0c"/></g><path d="M3 -3.5L8.5 -6.5L8.5 -2.5Z M3.5 -3L9 -1.5" fill="#2fb43a" stroke="#2fb43a" stroke-width="1.2"/><path d="M-9 8L-7 2.5L-4.5 6.5Z M-6 4L-4 8.5" fill="#2fb43a" stroke="#2fb43a" stroke-width="1"/></svg>
<svg style="left:596.5px;top:67.0px" width="19" height="19" viewBox="-9 -9 18 18"><g transform="skewY(20)"><rect x="-8.00" y="-5.00" width="3.3" height="3.3" fill="#f8f8f8"/><rect x="-8.00" y="-1.70" width="3.3" height="3.3" fill="#0c0c0c"/><rect x="-8.00" y="1.60" width="3.3" height="3.3" fill="#f8f8f8"/><rect x="-8.00" y="4.90" width="3.3" height="3.3" fill="#0c0c0c"/><rect x="-4.70" y="-5.00" width="3.3" height="3.3" fill="#0c0c0c"/><rect x="-4.70" y="-1.70" width="3.3" height="3.3" fill="#f8f8f8"/><rect x="-4.70" y="1.60" width="3.3" height="3.3" fill="#0c0c0c"/><rect x="-4.70" y="4.90" width="3.3" height="3.3" fill="#f8f8f8"/><rect x="-1.40" y="-5.00" width="3.3" height="3.3" fill="#f8f8f8"/><rect x="-1.40" y="-1.70" width="3.3" height="3.3" fill="#0c0c0c"/><rect x="-1.40" y="1.60" width="3.3" height="3.3" fill="#f8f8f8"/><rect x="-1.40" y="4.90" width="3.3" height="3.3" fill="#0c0c0c"/></g><path d="M3 -1.5L9 -5L8.5 -0.5Z M4 -1L8 -2" fill="#2fb43a" stroke="#2fb43a" stroke-width="1.2"/><path d="M-2 9L-0.5 4L2.5 7.5Z M0 5L1 9" fill="#2fb43a" stroke="#2fb43a" stroke-width="1"/></svg>
<svg style="left:618.5px;top:67.0px" width="19" height="19" viewBox="-9 -9 18 18"><g transform="skewY(20)"><rect x="-8.00" y="-5.00" width="3.3" height="3.3" fill="#f8f8f8"/><rect x="-8.00" y="-1.70" width="3.3" height="3.3" fill="#0c0c0c"/><rect x="-8.00" y="1.60" width="3.3" height="3.3" fill="#f8f8f8"/><rect x="-8.00" y="4.90" width="3.3" height="3.3" fill="#0c0c0c"/><rect x="-4.70" y="-5.00" width="3.3" height="3.3" fill="#0c0c0c"/><rect x="-4.70" y="-1.70" width="3.3" height="3.3" fill="#f8f8f8"/><rect x="-4.70" y="1.60" width="3.3" height="3.3" fill="#0c0c0c"/><rect x="-4.70" y="4.90" width="3.3" height="3.3" fill="#f8f8f8"/><rect x="-1.40" y="-5.00" width="3.3" height="3.3" fill="#f8f8f8"/><rect x="-1.40" y="-1.70" width="3.3" height="3.3" fill="#0c0c0c"/><rect x="-1.40" y="1.60" width="3.3" height="3.3" fill="#f8f8f8"/><rect x="-1.40" y="4.90" width="3.3" height="3.3" fill="#0c0c0c"/></g><path d="M3 -1.5L9 -5L8.5 -0.5Z M4 -1L8 -2" fill="#2fb43a" stroke="#2fb43a" stroke-width="1.2"/><path d="M-2 9L-0.5 4L2.5 7.5Z M0 5L1 9" fill="#2fb43a" stroke="#2fb43a" stroke-width="1"/></svg>
<svg style="left:640.5px;top:67.0px" width="19" height="19" viewBox="-9 -9 18 18"><clipPath id="cc"><circle r="8.3"/></clipPath><g clip-path="url(#cc)"><rect x="-8.50" y="-8.50" width="3.4" height="3.4" fill="#f8f8f8"/><rect x="-8.50" y="-5.10" width="3.4" height="3.4" fill="#0c0c0c"/><rect x="-8.50" y="-1.70" width="3.4" height="3.4" fill="#f8f8f8"/><rect x="-8.50" y="1.70" width="3.4" height="3.4" fill="#0c0c0c"/><rect x="-8.50" y="5.10" width="3.4" height="3.4" fill="#f8f8f8"/><rect x="-5.10" y="-8.50" width="3.4" height="3.4" fill="#0c0c0c"/><rect x="-5.10" y="-5.10" width="3.4" height="3.4" fill="#f8f8f8"/><rect x="-5.10" y="-1.70" width="3.4" height="3.4" fill="#0c0c0c"/><rect x="-5.10" y="1.70" width="3.4" height="3.4" fill="#f8f8f8"/><rect x="-5.10" y="5.10" width="3.4" height="3.4" fill="#0c0c0c"/><rect x="-1.70" y="-8.50" width="3.4" height="3.4" fill="#f8f8f8"/><rect x="-1.70" y="-5.10" width="3.4" height="3.4" fill="#0c0c0c"/><rect x="-1.70" y="-1.70" width="3.4" height="3.4" fill="#f8f8f8"/><rect x="-1.70" y="1.70" width="3.4" height="3.4" fill="#0c0c0c"/><rect x="-1.70" y="5.10" width="3.4" height="3.4" fill="#f8f8f8"/><rect x="1.70" y="-8.50" width="3.4" height="3.4" fill="#0c0c0c"/><rect x="1.70" y="-5.10" width="3.4" height="3.4" fill="#f8f8f8"/><rect x="1.70" y="-1.70" width="3.4" height="3.4" fill="#0c0c0c"/><rect x="1.70" y="1.70" width="3.4" height="3.4" fill="#f8f8f8"/><rect x="1.70" y="5.10" width="3.4" height="3.4" fill="#0c0c0c"/><rect x="5.10" y="-8.50" width="3.4" height="3.4" fill="#f8f8f8"/><rect x="5.10" y="-5.10" width="3.4" height="3.4" fill="#0c0c0c"/><rect x="5.10" y="-1.70" width="3.4" height="3.4" fill="#f8f8f8"/><rect x="5.10" y="1.70" width="3.4" height="3.4" fill="#0c0c0c"/><rect x="5.10" y="5.10" width="3.4" height="3.4" fill="#f8f8f8"/></g><path d="M-3.2 -2.5H3.2M0 -2.5V4.5" stroke="#2fb43a" stroke-width="1.8"/><path d="M-2 5.5H2" stroke="#f8f8f8" stroke-width="1.4"/></svg>
<svg style="left:662.5px;top:67.0px" width="19" height="19" viewBox="-9 -9 18 18"><rect x="-8" y="-8.5" width="16" height="17" fill="#e4e4e4"/><rect x="-8" y="-8.5" width="16" height="2.6" fill="#6aa0d8"/><rect x="-3.50" y="-4.50" width="3.2" height="3.2" fill="#f8f8f8"/><rect x="-3.50" y="-1.30" width="3.2" height="3.2" fill="#0c0c0c"/><rect x="-3.50" y="1.90" width="3.2" height="3.2" fill="#f8f8f8"/><rect x="-3.50" y="5.10" width="3.2" height="3.2" fill="#0c0c0c"/><rect x="-0.30" y="-4.50" width="3.2" height="3.2" fill="#0c0c0c"/><rect x="-0.30" y="-1.30" width="3.2" height="3.2" fill="#f8f8f8"/><rect x="-0.30" y="1.90" width="3.2" height="3.2" fill="#0c0c0c"/><rect x="-0.30" y="5.10" width="3.2" height="3.2" fill="#f8f8f8"/><rect x="2.90" y="-4.50" width="3.2" height="3.2" fill="#f8f8f8"/><rect x="2.90" y="-1.30" width="3.2" height="3.2" fill="#0c0c0c"/><rect x="2.90" y="1.90" width="3.2" height="3.2" fill="#f8f8f8"/><rect x="2.90" y="5.10" width="3.2" height="3.2" fill="#0c0c0c"/><path d="M-6.5 7.5V0.5M-6.5 4H-1" stroke="#2fb43a" stroke-width="2"/></svg>
<div class="a" style="left:28px;top:94px;width:822.5px;height:366.5px;background:#444;border:1.5px solid #5a5a5a;border-radius:2px"></div>
<div class="t" style="left:34px;top:97.5px;font-size:7.6px;color:#d0d0d0;">视图</div>
<div class="t" style="left:58px;top:97.5px;font-size:7.6px;color:#d0d0d0;">着色</div>
<div class="t" style="left:83px;top:97.5px;font-size:7.6px;color:#d0d0d0;">照明</div>
<div class="t" style="left:107px;top:97.5px;font-size:7.6px;color:#d0d0d0;">显示</div>
<div class="t" style="left:131px;top:97.5px;font-size:7.6px;color:#d0d0d0;">渲染器</div>
<div class="t" style="left:164px;top:97.5px;font-size:7.6px;color:#d0d0d0;">面板</div>
<svg style="left:36px;top:108px;" width="11" height="10" viewBox="0 0 11 10"><circle cx="3" cy="3" r="2" fill="#bbb"/><circle cx="7" cy="2.5" r="2" fill="#999"/><path d="M1 5L8 4L10 7L3 9Z" fill="#222"/><path d="M5 6L10 9" stroke="#111" stroke-width="1.5"/></svg>
<svg style="left:49px;top:108px;" width="10" height="10" viewBox="0 0 10 10"><circle cx="2.5" cy="2.5" r="1.8" fill="#bbb"/><circle cx="6" cy="2.5" r="1.8" fill="#999"/><path d="M1 4.5H7V7H1Z" fill="#333"/><rect x="6" y="4" width="4" height="6" fill="#d8d8d8"/></svg>
<svg style="left:62px;top:108px;" width="9" height="10" viewBox="0 0 9 10"><rect x="0" y="0" width="9" height="10" fill="#2f8f3a"/><rect x="1" y="1" width="2.5" height="8" fill="#e8f4e8"/><rect x="5.5" y="1" width="1.2" height="8" fill="#e8f4e8"/><rect x="7.5" y="1" width="1" height="8" fill="#bde0bd"/></svg>
<svg style="left:74px;top:108px;" width="10" height="10" viewBox="0 0 10 10"><path d="M0 5L6 0.5L10 4L4 9.5Z" fill="#4f9a4a" stroke="#8c8" stroke-width="0.6"/><path d="M3 5L6 3L7.5 4.5L4.5 6.5Z" fill="#2a5a2a"/></svg>
<svg style="left:87px;top:108px;" width="10" height="9" viewBox="0 0 10 9"><path d="M0 0L4 3L2 5Z" fill="#c22"/><path d="M2 2L5 6" stroke="#c22" stroke-width="1"/><circle cx="7" cy="4" r="2.5" fill="#ddd"/><circle cx="7" cy="4" r="1.2" fill="#c22"/></svg>
<div class="sep" style="left:101px;top:108px;height:10px"></div>
<svg style="left:106px;top:108px;" width="10" height="10" viewBox="0 0 10 10"><rect x="0" y="1.5" width="10" height="8" rx="1" fill="#8a949e"/><rect x="3" y="0" width="4" height="2" fill="#8a949e"/><circle cx="5" cy="5.5" r="2.8" fill="#c9d2da" stroke="#59636e" stroke-width="0.7"/></svg>
<svg style="left:119px;top:108px;" width="10" height="10" viewBox="0 0 10 10"><rect x="0" y="0.5" width="10" height="9" fill="#dfe6ee"/><rect x="1" y="3" width="8" height="4" fill="#3c5f94"/><path d="M2.5 5H3.5M4.5 5H5.5M6.5 5H7.5" stroke="#fff" stroke-width="1"/></svg>
<svg style="left:132px;top:108px;" width="10" height="10" viewBox="0 0 10 10"><rect x="0" y="0.5" width="10" height="9" fill="#e8eef6"/><circle cx="5" cy="5" r="3.4" fill="url(#bb)"/></svg>
<svg style="left:144px;top:108px;" width="10" height="10" viewBox="0 0 10 10"><rect x="0" y="0.5" width="10" height="9" fill="#c8c8c8"/><rect x="2" y="2.5" width="6" height="5" fill="#9a9a9a"/><circle cx="5" cy="5" r="1.8" fill="#e4e4e4"/></svg>
<svg style="left:156px;top:108px;" width="10" height="10" viewBox="0 0 10 10"><rect x="0" y="0.5" width="10" height="9" fill="#c4c4c4"/><rect x="1.5" y="2" width="7" height="6" fill="#6a6a6a"/><path d="M1.5 2L8.5 8M8.5 2L1.5 8" stroke="#ddd" stroke-width="0.8"/></svg>
<svg style="left:169px;top:108px;" width="10" height="10" viewBox="0 0 10 10"><rect x="0" y="0.5" width="10" height="9" fill="#dfe8e4"/><rect x="1" y="1.5" width="8" height="7" fill="#3e7a6a"/><path d="M2 3H4.5V5H2ZM5.5 5H8V7H5.5Z" fill="#bfe8ff"/><path d="M4.5 4L5.5 6" stroke="#fff" stroke-width="0.6"/></svg>
<svg style="left:182px;top:108px;" width="10" height="10" viewBox="0 0 10 10"><rect x="0" y="0.5" width="10" height="9" fill="#e4eee0"/><rect x="1" y="1.5" width="8" height="7" fill="#5f9a4a"/><path d="M2.5 3H7.5M5 3V7.5" stroke="#fff" stroke-width="1.4"/></svg>
<div class="sep" style="left:196px;top:108px;height:10px"></div>
<svg style="left:201px;top:108px;" width="10" height="10" viewBox="0 0 10 10"><path d="M0.5 2.5L3 0.5H9.5V7L7 9.5H0.5Z" fill="#8a8a8a" stroke="#c8c8c8" stroke-width="0.7"/><path d="M0.5 2.5H7V9.5M7 2.5L9.5 0.5" stroke="#c8c8c8" stroke-width="0.7" fill="none"/></svg>
<svg style="left:214px;top:108px;" width="9" height="10" viewBox="0 0 9 10"><path d="M0 2L2.5 0H9V7.5L6.5 10H0Z" fill="#3d86d8"/><path d="M0 2H6.5V10H0Z" fill="#5aa4ee"/><path d="M0 2L2.5 0H9L6.5 2Z" fill="#9cccf8"/></svg>
<svg style="left:226px;top:108px;" width="10" height="10" viewBox="0 0 10 10"><path d="M0.5 2.5L3 0.5H9.5V7L7 9.5H0.5Z" fill="#4a90dc" stroke="#dfeefc" stroke-width="0.8"/><path d="M0.5 2.5H7V9.5M7 2.5L9.5 0.5" stroke="#dfeefc" stroke-width="0.8" fill="none"/></svg>
<svg style="left:238.5px;top:108.5px;" width="9" height="9" viewBox="0 0 9 9"><clipPath id="cq"><circle cx="4.5" cy="4.5" r="4.3"/></clipPath><circle cx="4.5" cy="4.5" r="4.5" fill="#111"/><g clip-path="url(#cq)" fill="#f4f4f4"><rect x="0" y="0" width="3" height="3"/><rect x="6" y="0" width="3" height="3"/><rect x="3" y="3" width="3" height="3"/><rect x="0" y="6" width="3" height="3"/><rect x="6" y="6" width="3" height="3"/></g></svg>
<svg style="left:251px;top:108.5px;" width="9" height="9" viewBox="0 0 9 9"><circle cx="4.5" cy="4.5" r="4.5" fill="url(#by)"/></svg>
<svg style="left:263.5px;top:108.5px;" width="9" height="9" viewBox="0 0 9 9"><circle cx="4.5" cy="4.5" r="4.5" fill="url(#bg)"/></svg>
<svg style="left:275.5px;top:108.5px;" width="9" height="9" viewBox="0 0 9 9"><circle cx="4.5" cy="4.5" r="4.5" fill="url(#bo)"/></svg>
<div class="sep" style="left:290px;top:108px;height:10px"></div>
<svg style="left:295px;top:108px;" width="10" height="10" viewBox="0 0 10 10"><rect x="0.5" y="0.5" width="8" height="6" fill="none" stroke="#6a9a6a" stroke-width="0.8"/><path d="M5 4L9.5 6.5L8 7L9 9.5L7.5 10L6.5 7.7L5 8.5Z" fill="#d22" stroke="#fbb" stroke-width="0.4"/></svg>
<div class="sep" style="left:309px;top:108px;height:10px"></div>
<svg style="left:314px;top:108px;" width="10" height="10" viewBox="0 0 10 10"><path d="M0.5 2.5L3 0.5H9.5V7L7 9.5H0.5Z" fill="#7c7c7c" stroke="#d0d0d0" stroke-width="0.8"/><path d="M0.5 2.5H7V9.5M7 2.5L9.5 0.5" stroke="#d0d0d0" stroke-width="0.8" fill="none"/><rect x="2" y="4" width="3.5" height="4" fill="#444"/></svg>
<svg style="left:328px;top:108px;" width="9" height="10" viewBox="0 0 9 10"><rect x="0.5" y="2.5" width="6" height="7" fill="#333" stroke="#ccc" stroke-width="0.8"/><rect x="2.5" y="0.5" width="6" height="7" fill="none" stroke="#ccc" stroke-width="0.8"/></svg>
<svg style="left:339px;top:108px;" width="10" height="10" viewBox="0 0 10 10"><path d="M2.5 5L8 1.8M2.5 5L8 8.2" stroke="#ddd" stroke-width="1.3"/><circle cx="2.3" cy="5" r="2.1" fill="#e4e4e4"/><circle cx="8" cy="1.9" r="1.9" fill="#e4e4e4"/><circle cx="8" cy="8.1" r="1.9" fill="#e4e4e4"/></svg>
<div class="a" style="left:29.5px;top:119.6px;width:819.3px;height:338px;background:linear-gradient(180deg,#7c8da6 0%,#141619 100%);"></div>
<div class="t" style="left:40px;top:120.3px;font-size:7px;color:#0b5a2c;font-weight:bold;letter-spacing:0.2px">顶点:</div>
<div class="t" style="left:70px;top:119.7px;width:40px;text-align:right;font-size:8.4px;font-weight:bold;color:#e8eef4;transform-origin:100% 0;transform:scaleX(0.8)">56</div>
<div class="t" style="left:111px;top:119.7px;width:40px;text-align:right;font-size:8.4px;font-weight:bold;color:#e8eef4;transform-origin:100% 0;transform:scaleX(0.8)">56</div>
<div class="t" style="left:152px;top:119.7px;width:40px;text-align:right;font-size:8.4px;font-weight:bold;color:#e8eef4;transform-origin:100% 0;transform:scaleX(0.8)">0</div>
<div class="t" style="left:40px;top:132.7px;font-size:7px;color:#0b5a2c;font-weight:bold;letter-spacing:0.2px">边:</div>
<div class="t" style="left:70px;top:132.1px;width:40px;text-align:right;font-size:8.4px;font-weight:bold;color:#e8eef4;transform-origin:100% 0;transform:scaleX(0.8)">109</div>
<div class="t" style="left:111px;top:132.1px;width:40px;text-align:right;font-size:8.4px;font-weight:bold;color:#e8eef4;transform-origin:100% 0;transform:scaleX(0.8)">109</div>
<div class="t" style="left:152px;top:132.1px;width:40px;text-align:right;font-size:8.4px;font-weight:bold;color:#e8eef4;transform-origin:100% 0;transform:scaleX(0.8)">0</div>
<div class="t" style="left:40px;top:145.1px;font-size:7px;color:#0b5a2c;font-weight:bold;letter-spacing:0.2px">面:</div>
<div class="t" style="left:70px;top:144.5px;width:40px;text-align:right;font-size:8.4px;font-weight:bold;color:#e8eef4;transform-origin:100% 0;transform:scaleX(0.8)">54</div>
<div class="t" style="left:111px;top:144.5px;width:40px;text-align:right;font-size:8.4px;font-weight:bold;color:#e8eef4;transform-origin:100% 0;transform:scaleX(0.8)">54</div>
<div class="t" style="left:152px;top:144.5px;width:40px;text-align:right;font-size:8.4px;font-weight:bold;color:#e8eef4;transform-origin:100% 0;transform:scaleX(0.8)">0</div>
<div class="t" style="left:40px;top:157.5px;font-size:7px;color:#0b5a2c;font-weight:bold;letter-spacing:0.2px">三角形:</div>
<div class="t" style="left:70px;top:156.9px;width:40px;text-align:right;font-size:8.4px;font-weight:bold;color:#e8eef4;transform-origin:100% 0;transform:scaleX(0.8)">54</div>
<div class="t" style="left:111px;top:156.9px;width:40px;text-align:right;font-size:8.4px;font-weight:bold;color:#e8eef4;transform-origin:100% 0;transform:scaleX(0.8)">54</div>
<div class="t" style="left:152px;top:156.9px;width:40px;text-align:right;font-size:8.4px;font-weight:bold;color:#e8eef4;transform-origin:100% 0;transform:scaleX(0.8)">0</div>
<div class="t" style="left:40px;top:169.9px;font-size:7px;color:#0b5a2c;font-weight:bold;letter-spacing:0.2px">UV:</div>
<div class="t" style="left:70px;top:169.3px;width:40px;text-align:right;font-size:8.4px;font-weight:bold;color:#e8eef4;transform-origin:100% 0;transform:scaleX(0.8)">0</div>
<div class="t" style="left:111px;top:169.3px;width:40px;text-align:right;font-size:8.4px;font-weight:bold;color:#e8eef4;transform-origin:100% 0;transform:scaleX(0.8)">0</div>
<div class="t" style="left:152px;top:169.3px;width:40px;text-align:right;font-size:8.4px;font-weight:bold;color:#e8eef4;transform-origin:100% 0;transform:scaleX(0.8)">0</div>
<div class="t" style="left:425.5px;top:447px;font-size:7px;color:#0e5028;font-weight:bold">persp</div>
<svg style="left:0;top:0" width="1000" height="483" viewBox="0 0 1000 483"><g fill="none" stroke="#46d69b" stroke-linejoin="round"><path d="M369.8 170.9L378.3 167.0L389.2 170.9L400.0 179.4L409.3 189.5L417.0 200.4L424.9 209.7L435.7 220.6L448.5 230.0L459.7 230.2L471.5 226.6L482.3 222.7L496.0 217.8L509.9 217.2L524.6 223.7L533.5 236.5L538.4 249.3L539.4 259.1L537.4 268.0L529.5 278.8L518.7 288.6L509.0 297.0L502.0 308.5L500.1 321.9L501.0 336.4L505.9 350.9L514.1 366.8L522.8 382.8L528.6 398.7L530.0 408.8L527.1 417.5L519.9 421.9L508.3 416.1L493.8 401.6L479.3 384.2L464.8 368.3L451.7 355.2L438.2 347.0L434.3 345.7L426.7 343.5L415.9 343.9L403.9 345.7L394.1 346.7L384.3 344.6L375.7 338.0L368.0 329.3L364.1 320.7L363.3 312.0L365.9 303.3L371.3 294.6L378.9 284.8L385.4 273.9L388.7 264.1L386.5 254.0L383.5 245.0L379.8 234.5L375.2 222.0L371.3 209.7L368.2 200.4L365.9 191.0L365.0 183.3L366.6 177.0L369.8 170.9Z" stroke-width="1.25"/><path d="M369.8 170.9L400.0 179.4M369.8 170.9L417.0 200.4M369.8 170.9L435.7 220.6M369.8 170.9L448.5 230.0M366.6 177.0L448.5 230.0M366.6 177.0L518.7 288.6M365.0 183.3L518.7 288.6M365.9 191.0L518.7 288.6M368.2 200.4L518.7 288.6M371.3 209.7L518.7 288.6M371.3 209.7L509.0 297.0M375.2 222.0L509.0 297.0M379.8 234.5L509.0 297.0M379.8 234.5L502.0 308.5M383.5 245.0L502.0 308.5M386.5 254.0L502.0 308.5M388.7 264.1L502.0 308.5M518.7 288.6L459.7 230.2M518.7 288.6L471.5 226.6M518.7 288.6L482.3 222.7M518.7 288.6L496.0 217.8M518.7 288.6L509.9 217.2M496.0 217.8L529.5 278.8M509.9 217.2L529.5 278.8M509.9 217.2L537.4 268.0M524.6 223.7L537.4 268.0M533.5 236.5L537.4 268.0M538.4 249.3L537.4 268.0M388.7 264.1L438.2 347.0M385.4 273.9L426.7 343.5M378.9 284.8L415.9 343.9M378.9 284.8L403.9 345.7M371.3 294.6L403.9 345.7M371.3 294.6L394.1 346.7M365.9 303.3L394.1 346.7M365.9 303.3L384.3 344.6M363.3 312.0L384.3 344.6M363.3 312.0L375.7 338.0M364.1 320.7L375.7 338.0M364.1 320.7L368.0 329.3M385.4 273.9L434.3 345.7M438.2 347.0L502.0 308.5M438.2 347.0L500.1 321.9M451.7 355.2L500.1 321.9M451.7 355.2L501.0 336.4M464.8 368.3L501.0 336.4M464.8 368.3L505.9 350.9M479.3 384.2L505.9 350.9M479.3 384.2L514.1 366.8M493.8 401.6L514.1 366.8M493.8 401.6L522.8 382.8M493.8 401.6L528.6 398.7M508.3 416.1L528.6 398.7M508.3 416.1L530.0 408.8M508.3 416.1L527.1 417.5" stroke-width="0.95" stroke-opacity="0.9"/></g></svg>
<svg style="left:36px;top:428px;" width="20" height="20" viewBox="0 0 20 20"><path d="M9 15V4" stroke="#22d022" stroke-width="1.2"/><path d="M9 15H15" stroke="#d02020" stroke-width="1.2"/><path d="M9 15L4 15.5" stroke="#2030c0" stroke-width="1.2"/><circle cx="9" cy="3.5" r="1.4" fill="#22d022"/><circle cx="16" cy="15" r="1.6" fill="#d02020"/><circle cx="3" cy="15.5" r="1.8" fill="#1a28b0"/></svg>
<div class="a" style="left:3px;top:103px;width:22px;height:21px;background:#3f3f3f;border:1px solid #2f2f2f;border-radius:1px"></div>
<div class="a" style="left:3px;top:126px;width:22px;height:21px;background:#3f3f3f;border:1px solid #2f2f2f;border-radius:1px"></div>
<div class="a" style="left:3px;top:149px;width:22px;height:21px;background:#3f3f3f;border:1px solid #2f2f2f;border-radius:1px"></div>
<div class="a" style="left:3px;top:172px;width:22px;height:21px;background:#b4b4b4;border:1px solid #2f2f2f;border-radius:1px"></div>
<div class="a" style="left:3px;top:195px;width:22px;height:21px;background:#3f3f3f;border:1px solid #2f2f2f;border-radius:1px"></div>
<div class="a" style="left:3px;top:218px;width:22px;height:21px;background:#3f3f3f;border:1px solid #2f2f2f;border-radius:1px"></div>
<div class="a" style="left:3px;top:241px;width:22px;height:21px;background:#3f3f3f;border:1px solid #2f2f2f;border-radius:1px"></div>
<div class="a" style="left:3px;top:264px;width:22px;height:21px;background:#3f3f3f;border:1px solid #2f2f2f;border-radius:1px"></div>
<div class="a" style="left:3px;top:287px;width:22px;height:21px;background:#3f3f3f;border:1px solid #2f2f2f;border-radius:1px"></div>
<div class="a" style="left:3px;top:310px;width:22px;height:21px;background:#3f3f3f;border:1px solid #2f2f2f;border-radius:1px"></div>
<div class="a" style="left:0px;top:98px;width:2px;height:240px;background:repeating-linear-gradient(180deg,#4c4c4c 0 1px,#404040 1px 2px);"></div>
<svg style="left:3px;top:103px;" width="22" height="21" viewBox="0 0 22 21"><path d="M7 4L16 10.5L12 11.5L14.5 16.5L12.3 17.5L10 12.7L7 15Z" fill="#c8242c" stroke="#f4e0e0" stroke-width="0.9"/></svg>
<svg style="left:3px;top:126px;" width="22" height="21" viewBox="0 0 22 21"><path d="M4 5C6 2 9 3 10 5M4 5C3 8 4 12 6 15C8 17 10 15 10 13" stroke="#aaa" stroke-width="0.9" fill="none" stroke-dasharray="2 1.3"/><path d="M10 7L18 13L14.5 13.7L16.5 18L14.5 18.7L12.6 14.6L10 16.5Z" fill="#c8242c" stroke="#f4e0e0" stroke-width="0.8"/></svg>
<svg style="left:3px;top:149px;" width="22" height="21" viewBox="0 0 22 21"><path d="M17 4L8 13" stroke="#8a5a2a" stroke-width="1.6"/><path d="M4 17L8 11L11 14Z" fill="#d02020"/><circle cx="6" cy="12" r="1.3" fill="#e8e8a0"/><circle cx="10" cy="16" r="1.3" fill="#e8e8a0"/><path d="M3 14L9 18" stroke="#d02020" stroke-width="1.5"/></svg>
<svg style="left:3px;top:172px;" width="22" height="21" viewBox="0 0 22 21"><path d="M4 13L9 4L13 13Z" fill="#e4e4e4" stroke="#999" stroke-width="0.5"/><path d="M9 15L14 5L19 15A5 2 0 0 1 9 15Z" fill="#4b8bd8"/><path d="M14 5L16.5 15.8L19 15Z" fill="#2c5fa8"/><path d="M3 14L12 17L11 19L2 16Z" fill="#d02020"/><path d="M12 16L15 18.5L11 19.5Z" fill="#d02020"/></svg>
<svg style="left:3px;top:195px;" width="22" height="21" viewBox="0 0 22 21"><circle cx="11" cy="9" r="6.5" fill="url(#bb)"/><path d="M3 12C5 18 16 19 19 12L17 11C15 15 8 15 5.5 11Z" fill="#d02020"/></svg>
<svg style="left:3px;top:218px;" width="22" height="21" viewBox="0 0 22 21"><path d="M3 3L8 8M19 3L14 8M3 18L8 13M19 18L14 13" stroke="#d02020" stroke-width="1.6"/><g fill="#d02020"><rect x="2" y="2" width="4" height="4"/><rect x="16" y="2" width="4" height="4"/><rect x="2" y="15" width="4" height="4"/><rect x="16" y="15" width="4" height="4"/></g><path d="M7 8L11 6L15 8V13L11 15L7 13Z" fill="#4b8bd8"/><path d="M7 8L11 10L15 8L11 6Z" fill="#9cccf8"/></svg>
<svg style="left:3px;top:241px;" width="22" height="21" viewBox="0 0 22 21"><path d="M5 6L9 3H17V14L13 17H5Z" fill="none" stroke="#d8d8a8" stroke-width="0.9"/><path d="M5 6H13V17M13 6L17 3" stroke="#d8d8a8" stroke-width="0.9" fill="none"/><circle cx="11" cy="11" r="3" fill="url(#bb)"/><g fill="#5c5"><circle cx="5" cy="6" r="1.2"/><circle cx="17" cy="3" r="1.2"/><circle cx="13" cy="17" r="1.2"/></g><path d="M11 2V7" stroke="#3c3" stroke-width="1"/></svg>
<svg style="left:3px;top:264px;" width="22" height="21" viewBox="0 0 22 21"><path d="M11 3V10" stroke="#d02020" stroke-width="1" stroke-dasharray="1.5 1"/><g fill="#7ab8f0"><path d="M8 11L11 9L14 11L11 13Z"/><path d="M4 15L7 13L10 15L7 17Z"/><path d="M12 15L15 13L18 15L15 17Z"/><path d="M8 16L11 14L14 16L11 18Z" fill="#a8d4f8"/></g></svg>
<svg style="left:3px;top:287px;" width="22" height="21" viewBox="0 0 22 21"><path d="M11 11V4" stroke="#3c3" stroke-width="1.3"/><path d="M11 11L16 15" stroke="#d02020" stroke-width="1.3"/><path d="M11 11L6 14" stroke="#2030c0" stroke-width="1.3"/><path d="M9 5L11 2L13 5Z" fill="#3c3"/><circle cx="17" cy="16" r="1.6" fill="#d02020"/><circle cx="5" cy="14.5" r="1.8" fill="#2030c0"/><circle cx="11" cy="11" r="1.6" fill="#7ab8f0"/></svg>
<div class="a" style="left:4px;top:342px;width:22px;height:20px;background:linear-gradient(180deg,#d8d8d8,#b0b0b0);border:1px solid #888;border-radius:1px"></div>
<svg style="left:4px;top:342px;" width="22" height="20" viewBox="0 0 22 20"><path d="M5 8L11 4.5L17 8L11 11.5Z M8 6.3L14 9.8M14 6.3L8 9.8" fill="none" stroke="#333" stroke-width="0.8"/><path d="M4 17V13M4 17H8" stroke="#c22" stroke-width="0.9"/><path d="M4 17L6 15" stroke="#22c" stroke-width="0.9"/></svg>
<div class="a" style="left:4px;top:366px;width:11.2px;height:9.4px;background:#cbcbcb;border:0.6px solid #7a7a7a"></div>
<div class="a" style="left:14.8px;top:366px;width:11.2px;height:9.4px;background:#cbcbcb;border:0.6px solid #7a7a7a"></div>
<div class="a" style="left:4px;top:375px;width:11.2px;height:9.4px;background:#cbcbcb;border:0.6px solid #7a7a7a"></div>
<div class="a" style="left:14.8px;top:375px;width:11.2px;height:9.4px;background:#cbcbcb;border:0.6px solid #7a7a7a"></div>
<svg style="left:4px;top:366px;" width="22" height="19" viewBox="0 0 22 19"><path d="M5.6 1.3V8.1M2.2 4.7H9M5.6 10.3V17.1M2.2 13.7H9M16.4 10.3V17.1M13 13.7H19.8" stroke="#1c1c1c" stroke-width="1.3"/><path d="M12.8 4.7L16.4 2.5L20 4.7L16.4 6.9Z M14.6 3.6L18.2 5.8M18.2 3.6L14.6 5.8" fill="none" stroke="#2a2a2a" stroke-width="0.7"/></svg>
<div class="a" style="left:4px;top:389px;width:9px;height:19px;background:#2e2e2e;border:1px solid #555"></div>
<svg style="left:4px;top:389px;" width="9" height="19" viewBox="0 0 9 19"><path d="M2 3H7M2 5.5H7M2 8H7M2 10.5H7M2 13H7" stroke="#aaa" stroke-width="0.8"/></svg>
<div class="a" style="left:13.5px;top:389px;width:12.5px;height:19px;background:#d0d0d0;border:1px solid #777"></div>
<svg style="left:13.5px;top:389px;" width="13" height="19" viewBox="0 0 13 19"><path d="M2.5 8L6.2 5.8L10 8L6.2 10.2Z M4.3 6.9L8 9.1M8 6.9L4.3 9.1" fill="none" stroke="#333" stroke-width="0.7"/><path d="M2 16V14M2 16H4" stroke="#c22" stroke-width="0.7"/></svg>
<div class="a" style="left:4px;top:413px;width:22px;height:10.5px;background:#d4d4d4;border:1px solid #777"></div>
<svg style="left:4px;top:413px;" width="22" height="11" viewBox="0 0 22 11"><path d="M5 5.5L11 2.2L17 5.5L11 8.8Z M8 3.8L14 7.2M14 3.8L8 7.2" fill="none" stroke="#333" stroke-width="0.8"/></svg>
<div class="a" style="left:4px;top:424px;width:22px;height:10px;background:#d4d4d4;border:1px solid #777"></div>
<svg style="left:4px;top:424px;" width="22" height="10" viewBox="0 0 22 10"><path d="M2 7C5 2 8 8 11 5C14 2 17 8 20 4" stroke="#c44" stroke-width="0.8" fill="none"/><path d="M2 8H20M6 2V9" stroke="#555" stroke-width="0.6"/></svg>
<div class="a" style="left:5px;top:437px;width:19px;height:18px;background:#2e2e2e;border:1px solid #555;border-radius:2px"></div>
<svg style="left:5px;top:437px;" width="19" height="18" viewBox="0 0 19 18"><path d="M6 15C3 11 5 4 10 3C14 5 15 11 12 15C10 16 8 14 9 11C10 9 12 10 11 12" stroke="#d8d8d8" stroke-width="1.1" fill="none"/><path d="M10 3C9 7 7 9 7 12" stroke="#aaa" stroke-width="0.8" fill="none"/></svg>
<div class="t" style="left:885px;top:97px;font-size:6.6px;color:#d8d8d8;transform-origin:0 0;transform:scaleX(1.031);font-weight:bold">通道盒/层编辑器</div>
<div class="a" style="left:968px;top:94px;width:6.5px;height:6.5px;background:#262626;"></div>
<div class="a" style="left:970.5px;top:95px;width:3px;height:3px;background:transparent;border:1px solid #ddd"></div>
<div class="a" style="left:969px;top:97px;width:3px;height:2.5px;background:#ccc;"></div>
<svg style="left:975px;top:94px;" width="7" height="7" viewBox="0 0 7 7"><rect width="7" height="7" fill="#2a2a2a"/><path d="M1.5 1.5L5.5 5.5M5.5 1.5L1.5 5.5" stroke="#e8e8e8" stroke-width="1.2"/></svg>
<svg style="left:946px;top:107px;" width="12" height="11" viewBox="0 0 12 11"><path d="M6 7V1" stroke="#3c3" stroke-width="1.2"/><path d="M6 7L11 10" stroke="#d02020" stroke-width="1.2"/><path d="M6 7L1 9" stroke="#2a3ad0" stroke-width="1.2"/><circle cx="6" cy="1.5" r="1.2" fill="#3c3"/></svg>
<svg style="left:959px;top:107px;" width="9" height="9" viewBox="0 0 9 9"><circle cx="4.5" cy="4.5" r="4" fill="#888" stroke="#ccc" stroke-width="0.9"/><path d="M4.5 1.5A3 3 0 0 1 4.5 7.5Z" fill="#ddd"/></svg>
<svg style="left:971px;top:106px;" width="10" height="11" viewBox="0 0 10 11"><path d="M1 10L7 4" stroke="#999" stroke-width="1.4"/><path d="M6 2L9 1L8.5 4.5Z" fill="#bbb"/></svg>
<div class="t" style="left:860px;top:123px;font-size:7.6px;color:#d0d0d0;">通道</div>
<div class="t" style="left:885px;top:123px;font-size:7.6px;color:#d0d0d0;">编辑</div>
<div class="t" style="left:909px;top:123px;font-size:7.6px;color:#d0d0d0;">对象</div>
<div class="t" style="left:933px;top:123px;font-size:7.6px;color:#d0d0d0;">显示</div>
<div class="a" style="left:856px;top:133px;width:126px;height:212px;background:#454545;border:1px solid #585858"></div>
<div class="t" style="left:859px;top:137px;font-size:8px;color:#f0f0f0;font-weight:bold">bei_dst:Line001</div>
<div class="a" style="left:942.5px;top:145.5px;width:37px;height:99.5px;background:#2e2e2e;"></div>
<div class="t" style="left:880px;top:147.3px;width:59px;text-align:right;font-size:7.6px;color:#cfcfcf">平移 X</div>
<div class="t" style="left:940.5px;top:147.3px;font-size:7.6px;color:#d8d8d8;">0</div>
<div class="t" style="left:880px;top:157.2px;width:59px;text-align:right;font-size:7.6px;color:#cfcfcf">平移 Y</div>
<div class="t" style="left:940.5px;top:157.23000000000002px;font-size:7.6px;color:#d8d8d8;">0</div>
<div class="a" style="left:942.5px;top:154.93px;width:37px;height:1px;background:#3c3c3c;"></div>
<div class="t" style="left:880px;top:167.2px;width:59px;text-align:right;font-size:7.6px;color:#cfcfcf">平移 Z</div>
<div class="t" style="left:940.5px;top:167.16000000000003px;font-size:7.6px;color:#d8d8d8;">0</div>
<div class="a" style="left:942.5px;top:164.86px;width:37px;height:1px;background:#3c3c3c;"></div>
<div class="t" style="left:880px;top:177.1px;width:59px;text-align:right;font-size:7.6px;color:#cfcfcf">旋转 X</div>
<div class="t" style="left:940.5px;top:177.09px;font-size:7.6px;color:#d8d8d8;">0</div>
<div class="a" style="left:942.5px;top:174.79px;width:37px;height:1px;background:#3c3c3c;"></div>
<div class="t" style="left:880px;top:187.0px;width:59px;text-align:right;font-size:7.6px;color:#cfcfcf">旋转 Y</div>
<div class="t" style="left:940.5px;top:187.02px;font-size:7.6px;color:#d8d8d8;">0</div>
<div class="a" style="left:942.5px;top:184.72px;width:37px;height:1px;background:#3c3c3c;"></div>
<div class="t" style="left:880px;top:197.0px;width:59px;text-align:right;font-size:7.6px;color:#cfcfcf">旋转 Z</div>
<div class="t" style="left:940.5px;top:196.95000000000002px;font-size:7.6px;color:#d8d8d8;">0</div>
<div class="a" style="left:942.5px;top:194.65px;width:37px;height:1px;background:#3c3c3c;"></div>
<div class="t" style="left:880px;top:206.9px;width:59px;text-align:right;font-size:7.6px;color:#cfcfcf">缩放 X</div>
<div class="t" style="left:940.5px;top:206.88px;font-size:7.6px;color:#d8d8d8;">1</div>
<div class="a" style="left:942.5px;top:204.57999999999998px;width:37px;height:1px;background:#3c3c3c;"></div>
<div class="t" style="left:880px;top:216.8px;width:59px;text-align:right;font-size:7.6px;color:#cfcfcf">缩放 Y</div>
<div class="t" style="left:940.5px;top:216.81px;font-size:7.6px;color:#d8d8d8;">1</div>
<div class="a" style="left:942.5px;top:214.51px;width:37px;height:1px;background:#3c3c3c;"></div>
<div class="t" style="left:880px;top:226.7px;width:59px;text-align:right;font-size:7.6px;color:#cfcfcf">缩放 Z</div>
<div class="t" style="left:940.5px;top:226.74px;font-size:7.6px;color:#d8d8d8;">1</div>
<div class="a" style="left:942.5px;top:224.44px;width:37px;height:1px;background:#3c3c3c;"></div>
<div class="t" style="left:880px;top:236.7px;width:59px;text-align:right;font-size:7.6px;color:#cfcfcf">可见性</div>
<div class="t" style="left:940.5px;top:236.67000000000002px;font-size:7.6px;color:#d8d8d8;">启用</div>
<div class="a" style="left:942.5px;top:234.37px;width:37px;height:1px;background:#3c3c3c;"></div>
<div class="t" style="left:858.5px;top:248px;font-size:7.6px;color:#f0f0f0;font-weight:bold">形状</div>
<div class="a" style="left:857px;top:255.5px;width:124px;height:9px;background:#4d4d4d;"></div>
<div class="t" style="left:866.5px;top:257px;font-size:8px;color:#e8e8e8;font-weight:bold">bei_dst:Line001Shape</div>
<div class="a" style="left:858px;top:275px;width:124px;height:69px;background:#2d2d2d;"></div>
<div class="a" style="left:983px;top:92px;width:14px;height:368px;background:#484848;"></div>
<div class="a" style="left:984px;top:94px;width:13px;height:68px;background:#5e5e5e;"></div>
<div class="a" style="left:984px;top:165px;width:13px;height:51px;background:#3a3a3a;border:1px solid #505050"></div>
<div class="t" style="left:986px;top:99px;font-size:8px;color:#e0e0e0;writing-mode:vertical-rl;text-orientation:sideways">通道盒/层编辑器</div>
<div class="t" style="left:986px;top:169px;font-size:8px;color:#d8d8d8;writing-mode:vertical-rl;text-orientation:sideways">属性编辑器</div>
<div class="a" style="left:856.5px;top:353px;width:28px;height:12px;background:#606060;"></div>
<div class="a" style="left:886.5px;top:353px;width:28px;height:12px;background:#3c3c3c;border:1px solid #353535"></div>
<div class="a" style="left:916.5px;top:353px;width:28px;height:12px;background:#3c3c3c;border:1px solid #353535"></div>
<div class="t" style="left:862px;top:355.5px;font-size:7.6px;color:#e0e0e0;">显示</div>
<div class="t" style="left:893px;top:355.5px;font-size:7.6px;color:#d0d0d0;">渲染</div>
<div class="t" style="left:923px;top:355.5px;font-size:7.6px;color:#d0d0d0;">动画</div>
<div class="a" style="left:855.5px;top:365px;width:127.5px;height:95px;background:#484848;border:1px solid #393939"></div>
<div class="t" style="left:862px;top:369.5px;font-size:7.6px;color:#d0d0d0;">层</div>
<div class="t" style="left:879px;top:369.5px;font-size:7.6px;color:#d0d0d0;">选项</div>
<div class="t" style="left:904px;top:369.5px;font-size:7.6px;color:#d0d0d0;">帮助</div>
<svg style="left:921px;top:384px;" width="10" height="9" viewBox="0 0 10 9"><rect x="0" y="0" width="1.5" height="9" fill="#d02020"/><path d="M3 2L6.5 0.5L10 2L6.5 3.5ZM3 4.5L6.5 3L10 4.5L6.5 6ZM3 7L6.5 5.5L10 7L6.5 8.5Z" fill="#ccc" stroke="#666" stroke-width="0.3"/></svg>
<svg style="left:935px;top:384px;" width="11" height="9" viewBox="0 0 11 9"><rect x="0" y="0" width="1.5" height="9" fill="#d02020"/><path d="M3 2L7 0.5L11 2L7 3.5ZM3 4.5L7 3L11 4.5L7 6ZM3 7L7 5.5L11 7L7 8.5Z" fill="#eee" stroke="#666" stroke-width="0.3"/></svg>
<svg style="left:952px;top:383px;" width="11" height="10" viewBox="0 0 11 10"><path d="M0 7L5 4.5L10 7L5 9.5Z" fill="#f0f0f0"/><path d="M0 7V8.3L5 10.5L10 8.3V7L5 9.5Z" fill="#aaa"/><path d="M7 3L8 0.5L9 3L11 3.5L9 4.5L8 6.5L7 4.5L5.5 3.5Z" fill="#f0a020"/></svg>
<svg style="left:967px;top:383px;" width="11" height="10" viewBox="0 0 11 10"><path d="M0 7L5 4.5L10 7L5 9.5Z" fill="#6aaef0"/><path d="M0 7V8.3L5 10.5L10 8.3V7L5 9.5Z" fill="#3a6aa8"/><path d="M2 5.5L5 4L8 5.5L5 7Z" fill="#e8e8e8"/><path d="M7 3L8 0.5L9 3L11 3.5L9 4.5L8 6.5L7 4.5L5.5 3.5Z" fill="#f0a020"/></svg>
<div class="a" style="left:858.5px;top:396px;width:120px;height:60px;background:#2d2d2d;"></div>
<div class="a" style="left:860px;top:445px;width:118px;height:10px;background:#303030;"></div>
<div class="a" style="left:860px;top:445px;width:9px;height:10px;background:#686868;"></div>
<svg style="left:862px;top:447.5px;" width="4" height="5" viewBox="0 0 4 5"><path d="M4 0V5L0.5 2.5Z" fill="#ddd"/></svg>
<div class="a" style="left:869px;top:445px;width:47px;height:10px;background:#707070;"></div>
<div class="a" style="left:886px;top:447px;width:14px;height:6px;background:repeating-linear-gradient(90deg,#8a8a8a 0 1px,#666 1px 2px);"></div>
<div class="a" style="left:959px;top:445px;width:9px;height:10px;background:#686868;"></div>
<svg style="left:961.5px;top:447.5px;" width="4" height="5" viewBox="0 0 4 5"><path d="M4 0V5L0.5 2.5Z" fill="#ddd"/></svg>
<div class="a" style="left:969px;top:445px;width:9px;height:10px;background:#686868;"></div>
<svg style="left:972px;top:447.5px;" width="4" height="5" viewBox="0 0 4 5"><path d="M0 0V5L3.5 2.5Z" fill="#ddd"/></svg>
<div class="a" style="left:997px;top:0px;width:1.2px;height:483px;background:linear-gradient(180deg,#9ab 0,#9ab 14px,#3a5068 14px);"></div>
<div class="a" style="left:998.2px;top:0px;width:2px;height:483px;background:#c4ccd4;"></div>
<div class="a" style="left:9px;top:462px;width:800px;height:18.5px;background:#757575;"></div>
<div class="a" style="left:9px;top:462px;width:36.5px;height:18.5px;background:#5c5c5c;"></div>
<div class="a" style="left:0px;top:480.5px;width:997px;height:2.5px;background:#3a3a3a;"></div>
<div class="a" style="left:13px;top:471px;width:1px;height:9.5px;background:#0c0c0c;"></div>
<div class="t" style="left:19.1px;top:462.4px;font-size:6.8px;color:#1e1e1e;">1</div>
<div class="a" style="left:46px;top:471px;width:1px;height:9.5px;background:#0c0c0c;"></div>
<div class="t" style="left:52.13px;top:462.4px;font-size:6.8px;color:#1e1e1e;">2</div>
<div class="a" style="left:79px;top:471px;width:1px;height:9.5px;background:#0c0c0c;"></div>
<div class="t" style="left:85.16px;top:462.4px;font-size:6.8px;color:#1e1e1e;">3</div>
<div class="a" style="left:112px;top:471px;width:1px;height:9.5px;background:#0c0c0c;"></div>
<div class="t" style="left:118.19px;top:462.4px;font-size:6.8px;color:#1e1e1e;">4</div>
<div class="a" style="left:145px;top:471px;width:1px;height:9.5px;background:#0c0c0c;"></div>
<div class="t" style="left:151.22px;top:462.4px;font-size:6.8px;color:#1e1e1e;">5</div>
<div class="a" style="left:178px;top:471px;width:1px;height:9.5px;background:#0c0c0c;"></div>
<div class="t" style="left:184.25px;top:462.4px;font-size:6.8px;color:#1e1e1e;">6</div>
<div class="a" style="left:211px;top:471px;width:1px;height:9.5px;background:#0c0c0c;"></div>
<div class="t" style="left:217.28px;top:462.4px;font-size:6.8px;color:#1e1e1e;">7</div>
<div class="a" style="left:244px;top:471px;width:1px;height:9.5px;background:#0c0c0c;"></div>
<div class="t" style="left:250.31px;top:462.4px;font-size:6.8px;color:#1e1e1e;">8</div>
<div class="a" style="left:277px;top:471px;width:1px;height:9.5px;background:#0c0c0c;"></div>
<div class="t" style="left:283.34000000000003px;top:462.4px;font-size:6.8px;color:#1e1e1e;">9</div>
<div class="a" style="left:310px;top:471px;width:1px;height:9.5px;background:#0c0c0c;"></div>
<div class="t" style="left:315.87px;top:462.4px;font-size:6.8px;color:#1e1e1e;">10</div>
<div class="a" style="left:343px;top:471px;width:1px;height:9.5px;background:#0c0c0c;"></div>
<div class="t" style="left:348.90000000000003px;top:462.4px;font-size:6.8px;color:#1e1e1e;">11</div>
<div class="a" style="left:376px;top:471px;width:1px;height:9.5px;background:#0c0c0c;"></div>
<div class="t" style="left:381.93000000000006px;top:462.4px;font-size:6.8px;color:#1e1e1e;">12</div>
<div class="a" style="left:409px;top:471px;width:1px;height:9.5px;background:#0c0c0c;"></div>
<div class="t" style="left:414.96000000000004px;top:462.4px;font-size:6.8px;color:#1e1e1e;">13</div>
<div class="a" style="left:442px;top:471px;width:1px;height:9.5px;background:#0c0c0c;"></div>
<div class="t" style="left:447.99px;top:462.4px;font-size:6.8px;color:#1e1e1e;">14</div>
<div class="a" style="left:475px;top:471px;width:1px;height:9.5px;background:#0c0c0c;"></div>
<div class="t" style="left:481.02000000000004px;top:462.4px;font-size:6.8px;color:#1e1e1e;">15</div>
<div class="a" style="left:508px;top:471px;width:1px;height:9.5px;background:#0c0c0c;"></div>
<div class="t" style="left:514.0500000000001px;top:462.4px;font-size:6.8px;color:#1e1e1e;">16</div>
<div class="a" style="left:541px;top:471px;width:1px;height:9.5px;background:#0c0c0c;"></div>
<div class="t" style="left:547.08px;top:462.4px;font-size:6.8px;color:#1e1e1e;">17</div>
<div class="a" style="left:574px;top:471px;width:1px;height:9.5px;background:#0c0c0c;"></div>
<div class="t" style="left:580.11px;top:462.4px;font-size:6.8px;color:#1e1e1e;">18</div>
<div class="a" style="left:607px;top:471px;width:1px;height:9.5px;background:#0c0c0c;"></div>
<div class="t" style="left:613.14px;top:462.4px;font-size:6.8px;color:#1e1e1e;">19</div>
<div class="a" style="left:640px;top:471px;width:1px;height:9.5px;background:#0c0c0c;"></div>
<div class="t" style="left:646.1700000000001px;top:462.4px;font-size:6.8px;color:#1e1e1e;">20</div>
<div class="a" style="left:673px;top:471px;width:1px;height:9.5px;background:#0c0c0c;"></div>
<div class="t" style="left:679.2px;top:462.4px;font-size:6.8px;color:#1e1e1e;">21</div>
<div class="a" style="left:706px;top:471px;width:1px;height:9.5px;background:#0c0c0c;"></div>
<div class="t" style="left:712.23px;top:462.4px;font-size:6.8px;color:#1e1e1e;">22</div>
<div class="a" style="left:739px;top:471px;width:1px;height:9.5px;background:#0c0c0c;"></div>
<div class="t" style="left:745.2600000000001px;top:462.4px;font-size:6.8px;color:#1e1e1e;">23</div>
<div class="a" style="left:772px;top:471px;width:1px;height:9.5px;background:#0c0c0c;"></div>
<div class="t" style="left:778.2900000000001px;top:462.4px;font-size:6.8px;color:#1e1e1e;">24</div>
<div class="t" style="left:20px;top:472px;font-size:7.5px;color:#f4f4f4;">1</div>
<div class="a" style="left:811px;top:466.5px;width:31px;height:10px;background:#2e2e2e;"></div>
<div class="t" style="left:813.5px;top:468px;font-size:7.6px;color:#e0e0e0;">1.00</div>
<svg style="left:858px;top:467px;" width="12" height="10" viewBox="0 0 12 10"><path d="M1 1V9" stroke="#c8c8c8" stroke-width="1.4"/><path d="M7 5L11 2V8Z M3 5L7 2V8Z" fill="#c8c8c8"/></svg>
<svg style="left:877px;top:467px;" width="12" height="10" viewBox="0 0 12 10"><path d="M1.3 1V9" stroke="#c8c8c8" stroke-width="1.5"/><path d="M3 5L9.7 1V9Z" fill="#c8c8c8"/></svg>
<svg style="left:894px;top:467px;" width="12" height="10" viewBox="0 0 12 10"><path d="M1.7 -2.5V12.5" stroke="#a83848" stroke-width="1.6"/><path d="M3.5 5L10 1V9Z" fill="#c8c8c8"/></svg>
<svg style="left:913px;top:467px;" width="12" height="10" viewBox="0 0 12 10"><path d="M0.7 5L7.5 1V9Z" fill="#c8c8c8"/></svg>
<svg style="left:929px;top:467px;" width="12" height="10" viewBox="0 0 12 10"><path d="M8.7 5L1.2 1V9Z" fill="#c8c8c8"/></svg>
<svg style="left:946px;top:467px;" width="12" height="10" viewBox="0 0 12 10"><path d="M9 -2.5V12.5" stroke="#a83848" stroke-width="1.6"/><path d="M7.5 5L1.5 1V9Z" fill="#c8c8c8"/></svg>
<svg style="left:964px;top:467px;" width="12" height="10" viewBox="0 0 12 10"><path d="M9 1V9" stroke="#c8c8c8" stroke-width="1.5"/><path d="M7.3 5L0.7 1V9Z" fill="#c8c8c8"/></svg>
<svg style="left:980px;top:467px;" width="12" height="10" viewBox="0 0 12 10"><path d="M10.3 1V9" stroke="#c8c8c8" stroke-width="1.4"/><path d="M5 5L1 2V8Z M9 5L5 2V8Z" fill="#c8c8c8"/></svg>
<div class="a" style="left:842px;top:457px;width:12px;height:18px;border-radius:50%;background:radial-gradient(ellipse at 50% 50%,#c8c8c8 0%,#d8d8d8 55%,#f2f2f2 100%);transform:rotate(-6deg)"></div>
<div class="a" style="left:857.4000000000001px;top:458.6px;width:12.6px;height:16px;border-radius:50%;background:radial-gradient(ellipse at 50% 50%,#c8c8c8 0%,#d8d8d8 55%,#f2f2f2 100%);transform:rotate(6deg)"></div>
<div class="a" style="left:829.5px;top:469.5px;width:13.0px;height:17.0px;border-radius:50%;background:radial-gradient(ellipse at 50% 50%,#c8c8c8 0%,#d8d8d8 55%,#f2f2f2 100%);transform:rotate(-18deg)"></div>
<div class="a" style="left:867.2px;top:473.5px;width:13.0px;height:17.0px;border-radius:50%;background:radial-gradient(ellipse at 50% 50%,#c8c8c8 0%,#d8d8d8 55%,#f2f2f2 100%);transform:rotate(14deg)"></div>
<div class="a" style="left:846px;top:481px;width:18px;height:16px;border-radius:50%;background:radial-gradient(ellipse at 50% 50%,#c8c8c8 0%,#d8d8d8 55%,#f2f2f2 100%);transform:rotate(0deg)"></div>
<div class="a" style="left:768px;top:481px;width:20px;height:12px;border-radius:50%;background:radial-gradient(ellipse at 50% 50%,#c8c8c8 0%,#d8d8d8 55%,#f2f2f2 100%);transform:rotate(0deg)"></div>
<div class="a" style="left:820px;top:482.5px;width:6px;height:6px;border-radius:50%;background:radial-gradient(ellipse at 50% 50%,#c8c8c8 0%,#d8d8d8 55%,#f2f2f2 100%);transform:rotate(0deg)"></div>
</body></html>
